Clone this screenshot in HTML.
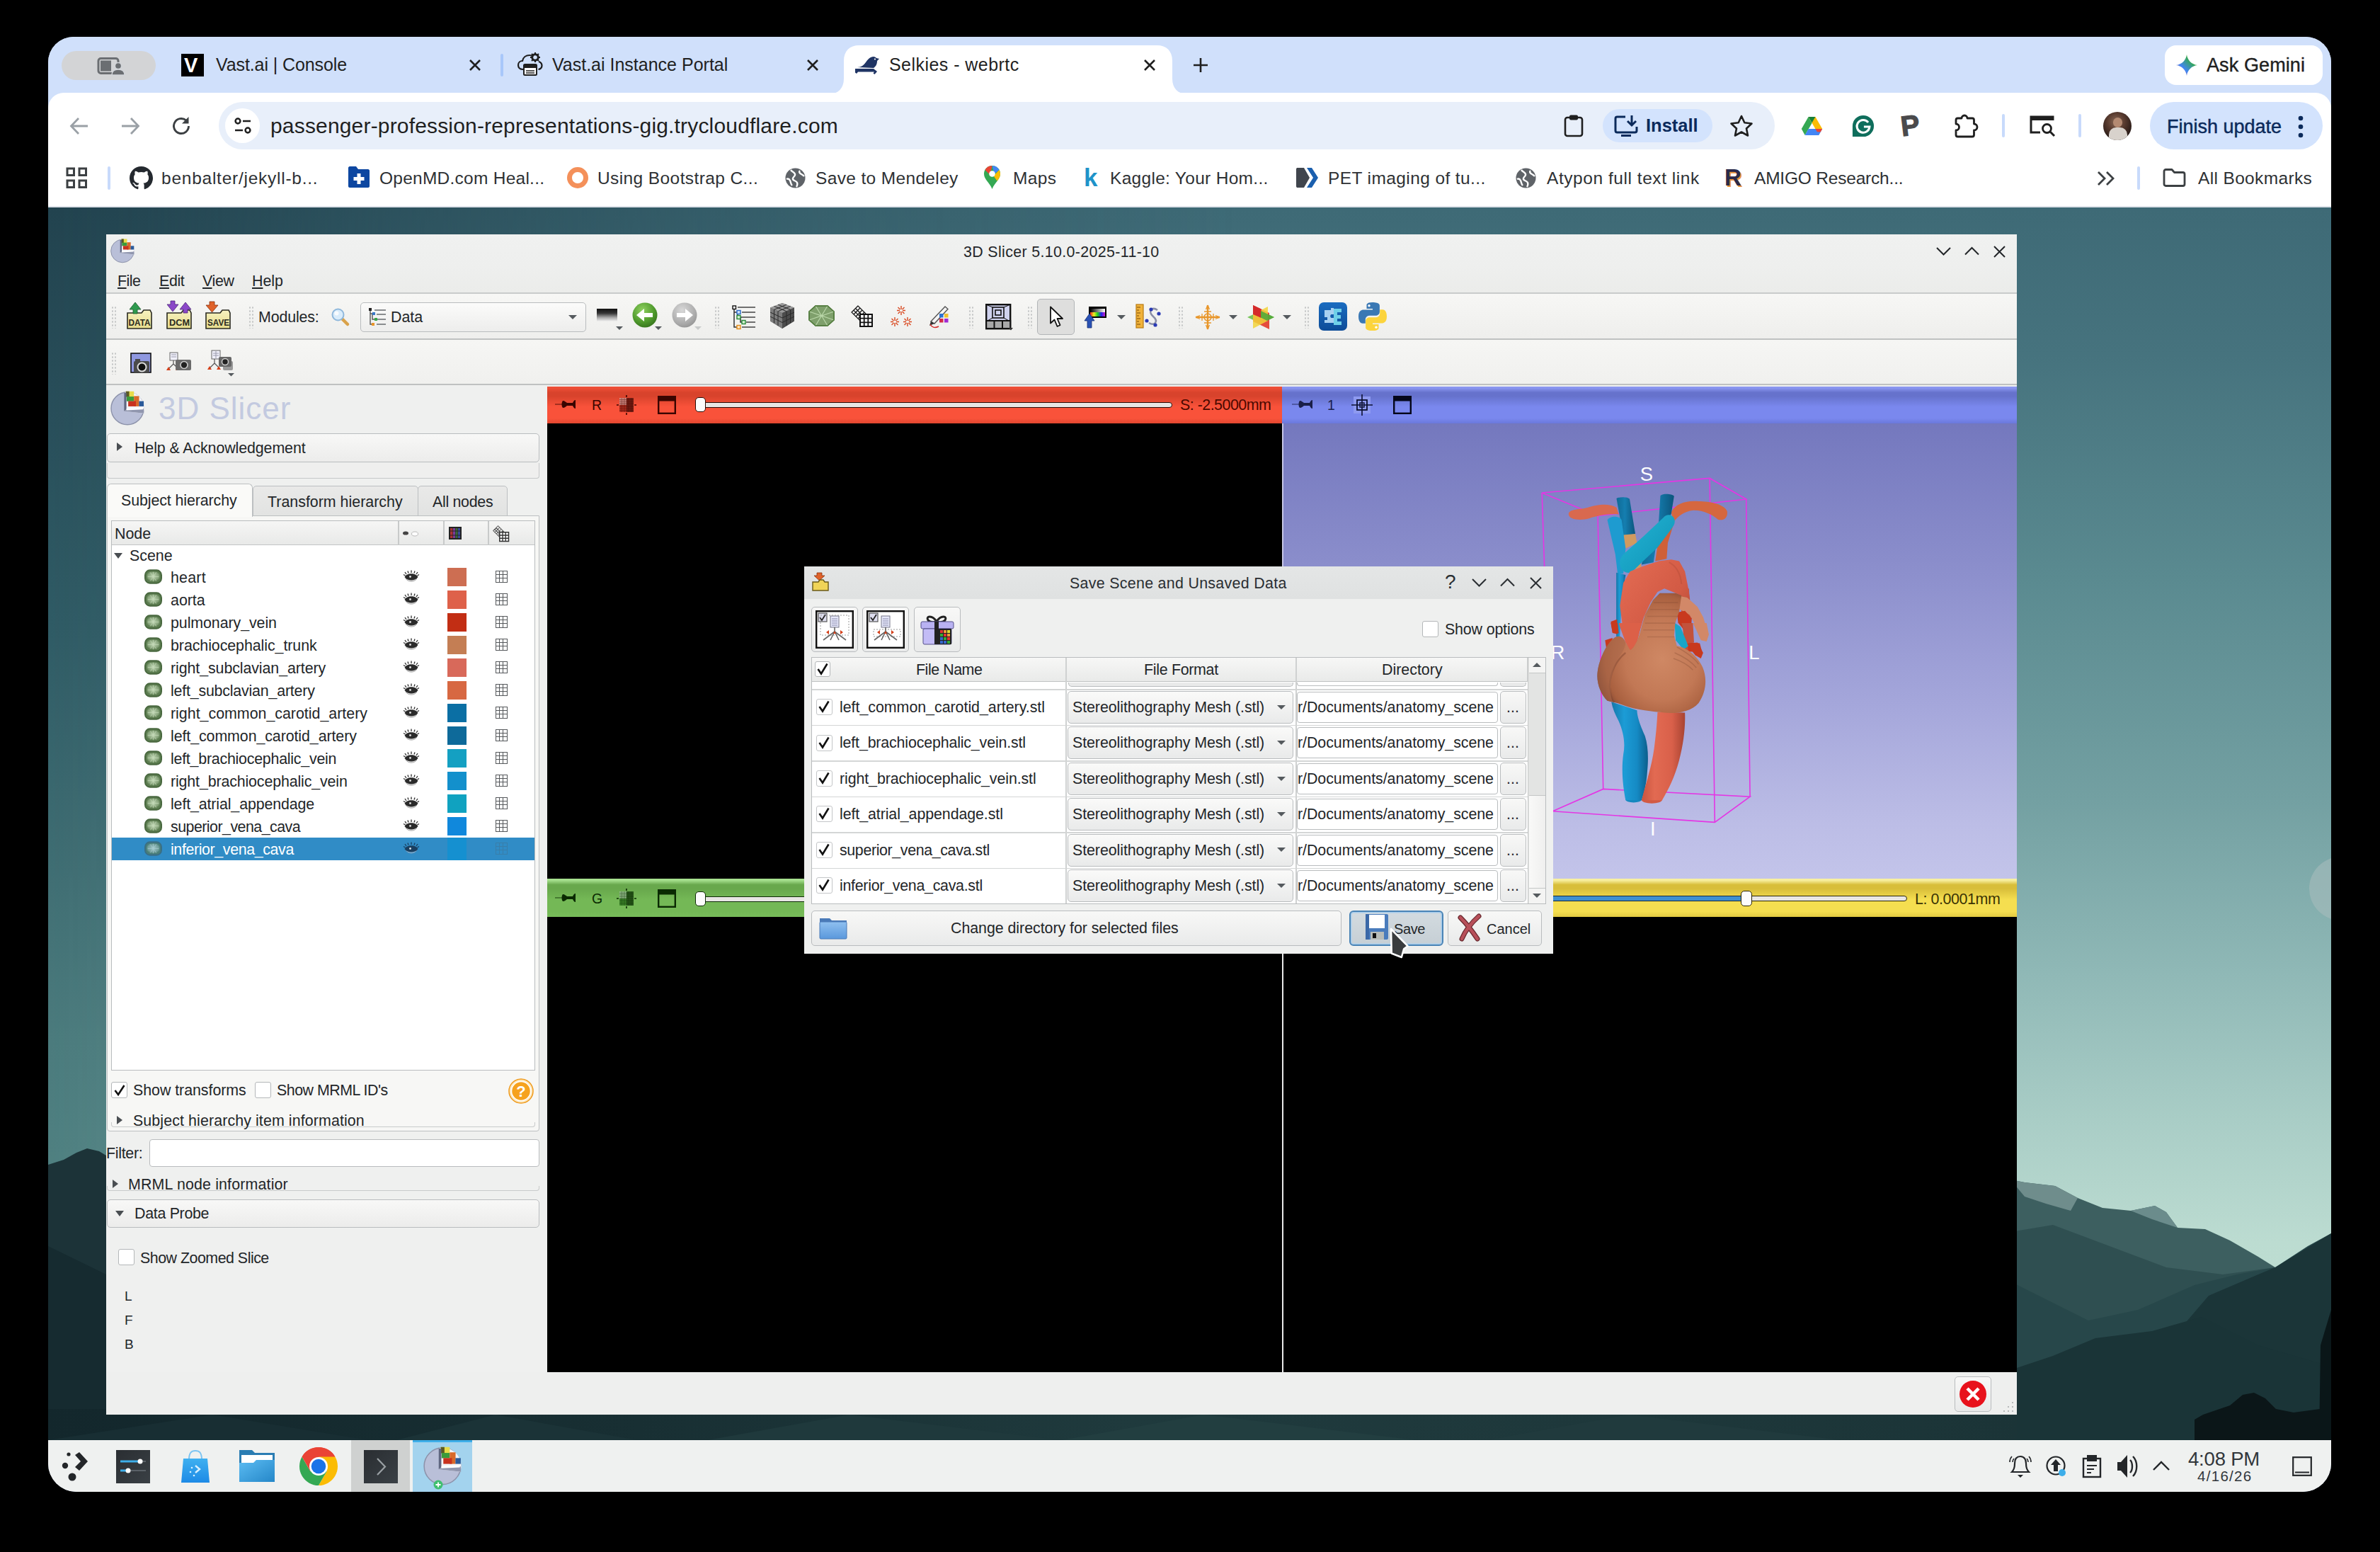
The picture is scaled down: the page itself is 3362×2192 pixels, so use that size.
<!DOCTYPE html>
<html lang="en">
<head>
<meta charset="utf-8">
<title>Selkies - webrtc</title>
<style>
*{box-sizing:border-box;margin:0;padding:0}
html,body{width:3362px;height:2192px;background:#000;overflow:hidden}
body{position:relative;font-family:"Liberation Sans",sans-serif;color:#1f1f1f}
.abs{position:absolute}
#win{position:absolute;left:68px;top:52px;width:3225px;height:2055px;border-radius:36px 36px 40px 40px;overflow:hidden;background:#d0e0fb}
/* everything inside #win uses page coords via this shifted layer */
#L{position:absolute;left:-68px;top:-52px;width:3362px;height:2192px}
.t{position:absolute;white-space:pre;line-height:1}
/* chrome */
.ctab{font-size:25px;letter-spacing:.35px;color:#1f1f1f}
.bm{font-size:24.5px;letter-spacing:.4px;color:#2e3134}
/* slicer (Qt) text */
.q{font-size:21.4px;color:#232629;margin-top:.8px}
svg{position:absolute;overflow:visible}

.hdl{position:absolute;width:7px;height:32px;background-image:radial-gradient(circle,#c4c6c6 1px,transparent 1.3px);background-size:4px 5px}
.dn{position:absolute;width:0;height:0;border-left:6px solid transparent;border-right:6px solid transparent;border-top:6px solid #555a5e}
.tri-r{position:absolute;width:0;height:0;border-top:6.500px solid transparent;border-bottom:6.500px solid transparent;border-left:8px solid #4a4e52}
.tri-d{position:absolute;width:0;height:0;border-left:6.500px solid transparent;border-right:6.500px solid transparent;border-top:8px solid #4a4e52}
.btn{position:absolute;border:1.500px solid #b9bcbe;border-radius:5px;background:linear-gradient(#f8f8f7,#e9eaea)}
.cb{position:absolute;width:23px;height:23px;border:1.500px solid #b4b7b9;border-radius:3px;background:#fff}

.ey{position:absolute;width:22px;height:14px}.gi{position:absolute;width:17px;height:17px;border:1.6px solid #55585b;background:linear-gradient(90deg,transparent 3.6px,#55585b 3.6px,#55585b 5.2px,transparent 5.2px,transparent 8.8px,#55585b 8.8px,#55585b 10.4px,transparent 10.4px),linear-gradient(180deg,transparent 3.6px,#55585b 3.6px,#55585b 5.2px,transparent 5.2px,transparent 8.8px,#55585b 8.8px,#55585b 10.4px,transparent 10.4px);background-color:#fff}
</style>
</head>
<body>
<div id="win"><div id="L">
<!-- ================= CHROME TOP ================= -->
<div class="abs" style="left:68px;top:52px;width:3225px;height:80px;background:#d0e0fb"></div>
<div class="abs" style="left:68px;top:131px;width:3225px;height:162px;background:#fff;border-radius:22px 22px 0 0"></div>
<div class="abs" style="left:68px;top:291px;width:3225px;height:2px;background:#dfe3ea"></div>
<!-- tab search pill -->
<div class="abs" style="left:87px;top:72px;width:133px;height:41px;border-radius:21px;background:#d3d4d6"></div>
<svg style="left:137px;top:80px" width="40" height="28" viewBox="0 0 40 28"><rect x="2" y="2.5" width="28" height="21" rx="3.5" fill="none" stroke="#6b6e72" stroke-width="3"/><rect x="5" y="5.5" width="15" height="15" fill="#6b6e72"/><circle cx="30" cy="13" r="4.6" fill="#6b6e72" stroke="#d2d5da" stroke-width="1.5"/><path d="M21 26c0-6 4-8 9-8s9 2 9 8z" fill="#6b6e72" stroke="#d2d5da" stroke-width="1.5"/></svg>
<!-- tab 1 -->
<div class="abs" style="left:256px;top:76px;width:32px;height:32px;background:#000"></div>
<div class="t" style="left:260px;top:78px;font-size:29px;font-weight:700;color:#fff">V</div>
<div class="t ctab" style="left:305px;top:79px;letter-spacing:-.1px">Vast.ai | Console</div>
<svg style="left:662px;top:83px" width="18" height="18" viewBox="0 0 18 18"><path d="M2 2l14 14M16 2L2 16" stroke="#1f1f1f" stroke-width="2.6"/></svg>
<div class="abs" style="left:707px;top:76px;width:4px;height:32px;border-radius:2px;background:#a8c7fa"></div>
<!-- tab 2 -->
<svg style="left:730px;top:73px" width="38" height="38" viewBox="0 0 38 38"><path d="M9 25c-5 0-7-3-7-6 0-4 3-6 6-6 1-5 5-8 10-8 2 0 4 .6 5.5 1.6" fill="none" stroke="#1f1f1f" stroke-width="2.2"/><path d="M31 14c3 1 4.500 3 4.500 5.500 0 3-2 5-5 5.500" fill="none" stroke="#1f1f1f" stroke-width="2.2"/><circle cx="26" cy="8" r="4.300" fill="none" stroke="#1f1f1f" stroke-width="3"/><path d="M26 1v3M26 12v3M19 8h3M30 8h3M21 3l2 2M29 11l2 2M31 3l-2 2M23 11l-2 2" stroke="#1f1f1f" stroke-width="2"/><rect x="10" y="18" width="18" height="15" rx="1.5" fill="#fff" stroke="#1f1f1f" stroke-width="2"/><rect x="10" y="18" width="18" height="5" fill="#1f1f1f"/><path d="M13 27h12M13 30h12" stroke="#1f1f1f" stroke-width="1.6"/></svg>
<div class="t ctab" style="left:780px;top:79px;letter-spacing:0">Vast.ai Instance Portal</div>
<svg style="left:1139px;top:83px" width="18" height="18" viewBox="0 0 18 18"><path d="M2 2l14 14M16 2L2 16" stroke="#1f1f1f" stroke-width="2.6"/></svg>
<!-- active tab -->
<svg style="left:1170px;top:64px" width="508" height="69" viewBox="0 0 508 69"><path d="M0 69C14 69 22 61 22 47V22C22 8 30 0 44 0H464C478 0 486 8 486 22V47C486 61 494 69 508 69Z" fill="#fff"/></svg>
<svg style="left:1207px;top:78px" width="36" height="28" viewBox="0 0 36 28"><path d="M4 17c6 0 9-3 12-7 3-4 6-8 11-8 2 0 3 1 4 2l4 1-3 3c0 5-2 8-5 10z" fill="#1f3464"/><path d="M1 19h26l5 4-3.500 4-2-1.500 1.500-2H5l-2 2.500-2-1.500z" fill="#1f3464"/><circle cx="29" cy="5.500" r="1.100" fill="#fff"/></svg>
<div class="t ctab" style="left:1256px;top:79px;letter-spacing:.45px">Selkies - webrtc</div>
<svg style="left:1615px;top:83px" width="18" height="18" viewBox="0 0 18 18"><path d="M2 2l14 14M16 2L2 16" stroke="#1f1f1f" stroke-width="2.6"/></svg>
<svg style="left:1685px;top:81px" width="22" height="22" viewBox="0 0 22 22"><path d="M11 1v20M1 11h20" stroke="#1f1f1f" stroke-width="2.6"/></svg>
<!-- Ask Gemini -->
<div class="abs" style="left:3058px;top:64px;width:223px;height:56px;border-radius:16px;background:#fff"></div>
<svg style="left:3073px;top:76px" width="32" height="32" viewBox="0 0 32 32"><defs><linearGradient id="gem" x1="0" y1="1" x2="1" y2="0"><stop offset="0" stop-color="#e94335"/><stop offset=".35" stop-color="#4285f4"/><stop offset=".7" stop-color="#34a853"/><stop offset="1" stop-color="#fbbc04"/></linearGradient></defs><path d="M16 1C17 9 23 15 31 16 23 17 17 23 16 31 15 23 9 17 1 16 9 15 15 9 16 1Z" fill="url(#gem)"/></svg>
<div class="t" style="left:3117px;top:78.5px;font-size:27px;letter-spacing:.1px;color:#1f1f1f;-webkit-text-stroke:.4px #1f1f1f">Ask Gemini</div>
<!-- toolbar nav -->
<svg style="left:97px;top:163px" width="30" height="30" viewBox="0 0 30 30"><path d="M27 15H4M14 4L3.500 15 14 26" fill="none" stroke="#9aa0a6" stroke-width="2.800"/></svg>
<svg style="left:169px;top:163px" width="30" height="30" viewBox="0 0 30 30"><path d="M3 15h23M16 4l10.500 11L16 26" fill="none" stroke="#9aa0a6" stroke-width="2.800"/></svg>
<svg style="left:240px;top:162px" width="32" height="32" viewBox="0 0 32 32"><path d="M26.500 16A10.500 10.500 0 1 1 23 8.200" fill="none" stroke="#3c4043" stroke-width="2.900"/><path d="M26.500 3v9.500H17z" fill="#3c4043"/></svg>
<!-- omnibox -->
<div class="abs" style="left:309px;top:144px;width:2198px;height:67px;border-radius:34px;background:#e8effa"></div>
<div class="abs" style="left:318px;top:153px;width:49px;height:49px;border-radius:25px;background:#fff"></div>
<svg style="left:330px;top:165px" width="26" height="26" viewBox="0 0 26 26"><circle cx="6" cy="6" r="3.400" fill="none" stroke="#1f1f1f" stroke-width="2.500"/><path d="M13 6h11" stroke="#1f1f1f" stroke-width="2.500"/><circle cx="20" cy="19" r="3.400" fill="none" stroke="#1f1f1f" stroke-width="2.500"/><path d="M2 19h11" stroke="#1f1f1f" stroke-width="2.500"/></svg>
<div class="t" style="left:382px;top:163px;font-size:30px;letter-spacing:.17px;color:#1f1f1f">passenger-profession-representations-gig.trycloudflare.com</div>
<!-- omnibox right icons -->
<svg style="left:2208px;top:161px" width="30" height="34" viewBox="0 0 30 34"><rect x="3" y="5" width="24" height="26" rx="3" fill="none" stroke="#1f1f1f" stroke-width="2.600"/><rect x="9" y="1.500" width="12" height="7" rx="2" fill="#1f1f1f"/></svg>
<div class="abs" style="left:2264px;top:154px;width:155px;height:47px;border-radius:24px;background:#d3e3fd"></div>
<svg style="left:2279px;top:162px" width="36" height="32" viewBox="0 0 36 32"><path d="M17 3H5.500C4 3 3 4 3 5.500v17C3 24 4 25 5.500 25h25c1.500 0 2.500-1 2.500-2.500V17" fill="none" stroke="#0b2a5b" stroke-width="3"/><path d="M11 29.500h14" stroke="#0b2a5b" stroke-width="3"/><path d="M26 1v13M20 9l6 6 6-6" fill="none" stroke="#0b2a5b" stroke-width="3"/></svg>
<div class="t" style="left:2325px;top:165px;font-size:25.5px;font-weight:700;letter-spacing:0;color:#0b2a5b">Install</div>
<svg style="left:2443px;top:161px" width="34" height="34" viewBox="0 0 34 34"><path d="M17 3l4.300 9.300 10.200 1.200-7.500 7 2 10L17 25.500 8 30.500l2-10-7.500-7 10.200-1.200z" fill="none" stroke="#1f1f1f" stroke-width="2.600" stroke-linejoin="round"/></svg>
<!-- extension icons -->
<svg style="left:2544px;top:164px" width="31" height="28" viewBox="0 0 38 34"><path d="M13 1h12l12 21H25z" fill="#fbbc04"/><path d="M13 1L1 22l6 11 12-21z" fill="#34a853"/><path d="M13 22h24l-6 11H7z" fill="#4285f4"/><path d="M25 22h12l-3 5.500L28 27z" fill="#ea4335"/><path d="M13 1l6 10.500L25 1z" fill="#188038"/></svg>
<svg style="left:2616px;top:162px" width="32" height="32" viewBox="0 0 34 34"><path d="M17 1a16 16 0 0 1 0 32H1V17A16 16 0 0 1 17 1z" fill="#0f6e5c"/><path d="M24.500 11.500A9.500 9.500 0 1 0 26.500 18H18" fill="none" stroke="#fff" stroke-width="3.200"/></svg>
<div class="t" style="left:2685px;top:157px;font-size:40px;font-weight:700;color:#4a4a4c;transform:rotate(-7deg);-webkit-text-stroke:1.200px #4a4a4c">P</div>
<svg style="left:2758px;top:160px" width="36" height="36" viewBox="0 0 36 36"><path d="M13 7a4 4 0 0 1 8 0h7c1.500 0 2.500 1 2.500 2.500V15a4.500 4.500 0 0 1 0 9v6.500c0 1.500-1 2.500-2.500 2.500H7.500C6 33 5 32 5 30.500V24a4.500 4.500 0 0 0 0-9V9.500C5 8 6 7 7.500 7z" fill="none" stroke="#1f1f1f" stroke-width="2.800" stroke-linejoin="round"/></svg>
<div class="abs" style="left:2828px;top:161px;width:4px;height:33px;border-radius:2px;background:#c8dafb"></div>
<svg style="left:2866px;top:162px" width="38" height="32" viewBox="0 0 38 32"><path d="M34 8V3H3v22h13" fill="none" stroke="#1f1f1f" stroke-width="3"/><rect x="3" y="2" width="31" height="6" fill="#1f1f1f"/><circle cx="25.500" cy="19.500" r="6" fill="none" stroke="#1f1f1f" stroke-width="2.800"/><path d="M30 24l6 6" stroke="#1f1f1f" stroke-width="3"/></svg>
<div class="abs" style="left:2936px;top:161px;width:4px;height:33px;border-radius:2px;background:#c8dafb"></div>
<div class="abs" style="left:2971px;top:158px;width:40px;height:40px;border-radius:20px;background:radial-gradient(circle at 45% 35%,#8a6a58 0,#5a3c30 35%,#2b1c18 70%,#1a1210 100%);overflow:hidden"><div class="abs" style="left:14px;top:8px;width:13px;height:14px;border-radius:7px;background:#b48a72"></div><div class="abs" style="left:8px;top:22px;width:26px;height:20px;border-radius:10px 10px 0 0;background:#d8d2cc"></div></div>
<div class="abs" style="left:3037px;top:144px;width:244px;height:67px;border-radius:34px;background:#d3e3fd"></div>
<div class="t" style="left:3061px;top:166px;font-size:27px;color:#0b2a5b;-webkit-text-stroke:.45px #0b2a5b">Finish update</div>
<svg style="left:3246px;top:162px" width="8" height="34" viewBox="0 0 8 34"><circle cx="4" cy="5" r="3.300" fill="#0b2a5b"/><circle cx="4" cy="17" r="3.300" fill="#0b2a5b"/><circle cx="4" cy="29" r="3.300" fill="#0b2a5b"/></svg>
<!-- bookmarks bar -->
<svg style="left:93px;top:236px" width="31" height="31" viewBox="0 0 31 31"><g fill="none" stroke="#3c4043" stroke-width="3"><rect x="2" y="2" width="9.500" height="9.500"/><rect x="19" y="2" width="9.500" height="9.500"/><rect x="2" y="19" width="9.500" height="9.500"/><rect x="19" y="19" width="9.500" height="9.500"/></g></svg>
<div class="abs" style="left:152px;top:235px;width:4px;height:33px;border-radius:2px;background:#c8dafb"></div>
<svg style="left:183px;top:235px" width="33" height="33" viewBox="0 0 16 16"><path fill="#24292f" d="M8 0C3.580 0 0 3.580 0 8c0 3.540 2.290 6.530 5.470 7.590.4.070.55-.17.55-.38 0-.19-.01-.82-.01-1.490-2.010.37-2.530-.49-2.690-.94-.09-.23-.48-.94-.82-1.130-.28-.15-.68-.52-.01-.53.630-.01 1.080.58 1.230.82.720 1.210 1.870.87 2.330.66.070-.52.280-.87.510-1.070-1.780-.2-3.640-.89-3.640-3.950 0-.87.310-1.590.82-2.150-.08-.2-.36-1.020.08-2.120 0 0 .67-.21 2.200.82.640-.18 1.320-.27 2-.27s1.360.09 2 .27c1.530-1.040 2.200-.82 2.200-.82.440 1.100.160 1.920.08 2.120.51.560.82 1.270.82 2.150 0 3.070-1.870 3.750-3.650 3.950.29.250.54.730.54 1.480 0 1.070-.01 1.930-.01 2.200 0 .21.150.46.550.38A8.013 8.013 0 0 0 16 8c0-4.420-3.580-8-8-8z"/></svg>
<div class="t bm" style="left:228px;top:240px;letter-spacing:.75px">benbalter/jekyll-b...</div>
<svg style="left:491px;top:234px" width="32" height="32" viewBox="0 0 32 32"><path d="M1 3c0-1 1-2 2-2h9l3 4h14c1 0 2 1 2 2v22c0 1-1 2-2 2H3c-1 0-2-1-2-2z" fill="#0d47a1"/><path d="M13.500 11h5v5h5v5h-5v5h-5v-5h-5v-5h5z" fill="#fff"/></svg>
<div class="t bm" style="left:536px;top:240px;letter-spacing:.25px">OpenMD.com Heal...</div>
<svg style="left:800px;top:235px" width="32" height="32" viewBox="0 0 32 32"><circle cx="16" cy="16" r="11.500" fill="none" stroke="#f4905a" stroke-width="7"/></svg>
<div class="t bm" style="left:844px;top:240px;letter-spacing:.4px">Using Bootstrap C...</div>
<svg style="left:1108px;top:236px" width="31" height="31" viewBox="0 0 31 31"><circle cx="15.500" cy="15.500" r="14" fill="#5f6368"/><path d="M9 4c2 3 5 3 6 6s-4 4-3 7 5 2 6 5-1 6-1 6M22 5c-2 2 0 4 2 5s4 3 4 3M3 17c2-1 4 0 5 2s1 5 3 7" fill="none" stroke="#fff" stroke-width="2.400"/></svg>
<div class="t bm" style="left:1152px;top:240px;letter-spacing:.35px">Save to Mendeley</div>
<svg style="left:1390px;top:234px" width="23" height="34" viewBox="0 0 23 34"><path d="M11.500 33C9 25 0 20 0 11.500a11.500 11.500 0 0 1 23 0C23 20 14 25 11.500 33z" fill="#34a853"/><path d="M11.500 0A11.500 11.500 0 0 0 1.500 6l7 7z" fill="#ea4335"/><path d="M11.500 0a11.500 11.500 0 0 1 10 6l-7 6z" fill="#4285f4"/><path d="M21.500 6c1 2 1.500 4 1.500 5.500 0 4-2 7-4.500 10l-5-7z" fill="#fbbc04"/><path d="M1.500 6C.5 8 0 10 0 11.500c0 3 1.500 6 3.500 8.500l6-7z" fill="#1a73e8" opacity=".0"/><circle cx="11.500" cy="11.500" r="4.300" fill="#fff"/></svg>
<div class="t bm" style="left:1431px;top:240px">Maps</div>
<div class="t" style="left:1531px;top:233px;font-size:35px;font-weight:700;color:#1f93c9">k</div>
<div class="t bm" style="left:1568px;top:240px;letter-spacing:.3px">Kaggle: Your Hom...</div>
<svg style="left:1830px;top:236px" width="34" height="30" viewBox="0 0 34 30"><path d="M1 3c0-1.500 1-2 2-2h9l8 14-8 14H3c-1 0-2-.500-2-2z" fill="#40454d"/><path d="M16 1h7l9 14-9 14h-7l9-14z" fill="#1b5fae"/></svg>
<div class="t bm" style="left:1876px;top:240px;letter-spacing:.4px">PET imaging of tu...</div>
<svg style="left:2140px;top:236px" width="31" height="31" viewBox="0 0 31 31"><circle cx="15.500" cy="15.500" r="14" fill="#5f6368"/><path d="M9 4c2 3 5 3 6 6s-4 4-3 7 5 2 6 5-1 6-1 6M22 5c-2 2 0 4 2 5s4 3 4 3M3 17c2-1 4 0 5 2s1 5 3 7" fill="none" stroke="#fff" stroke-width="2.400"/></svg>
<div class="t bm" style="left:2185px;top:240px;letter-spacing:.55px">Atypon full text link</div>
<div class="t" style="left:2436px;top:234px;font-size:33px;font-weight:700;color:#2a2a4a;text-shadow:2px 2px 0 #e8923a">R</div>
<div class="t bm" style="left:2478px;top:240px;letter-spacing:-.2px">AMIGO Research...</div>
<svg style="left:2962px;top:241px" width="26" height="22" viewBox="0 0 26 22"><path d="M2 2l9 9-9 9M14 2l9 9-9 9" fill="none" stroke="#3c4043" stroke-width="2.800"/></svg>
<div class="abs" style="left:3019px;top:235px;width:4px;height:33px;border-radius:2px;background:#c8dafb"></div>
<svg style="left:3055px;top:237px" width="33" height="28" viewBox="0 0 33 28"><path d="M2 5c0-1.500 1-2.500 2.500-2.500H13l3.500 4h12c1.500 0 2.500 1 2.500 2.500v14c0 1.500-1 2.500-2.500 2.500h-24C3 25.500 2 24.500 2 23z" fill="none" stroke="#3c4043" stroke-width="2.800" stroke-linejoin="round"/></svg>
<div class="t bm" style="left:3105px;top:240px;letter-spacing:.35px">All Bookmarks</div>
<!-- ================= DESKTOP WALLPAPER ================= -->
<div class="abs" style="left:68px;top:293px;width:3225px;height:1741px;background:linear-gradient(180deg,#3e6a76 0,#46737e 12%,#5a8a90 30%,#73a0a2 48%,#8fb8b6 62%,#a9cdc6 74%,#bcdcd1 84%,#c2e0d3 100%)"></div>
<div class="abs" style="left:68px;top:293px;width:3225px;height:1741px;background:linear-gradient(180deg,#22434f 0,#2f5a64 34%,#4a7a7c 67.5%,#4e7f80 77%,#4e7f80 100%);-webkit-mask-image:linear-gradient(90deg,#000 0,rgba(0,0,0,.92) 4%,rgba(0,0,0,.6) 16%,rgba(0,0,0,.25) 34%,rgba(0,0,0,0) 52%);mask-image:linear-gradient(90deg,#000 0,rgba(0,0,0,.92) 4%,rgba(0,0,0,.6) 16%,rgba(0,0,0,.25) 34%,rgba(0,0,0,0) 52%)"></div>
<svg style="left:68px;top:1500px" width="3225" height="534" viewBox="68 1500 3225 534">
<!-- right far ridge -->
<path d="M2840 1666L2860 1670 2903 1675 2935 1692 2970 1706 3010 1710 3044 1703 3060 1712 3076 1734 3115 1736 3150 1752 3190 1775 3214 1790 3293 1800V2034H2840Z" fill="#3d5f60"/>
<path d="M2840 1666L2860 1670 2903 1675 2935 1692 2925 1710 2890 1700 2860 1690Z" fill="#6f8d8c"/>
<path d="M3010 1710L3044 1703 3060 1712 3076 1734 3040 1722Z" fill="#6b8c8c"/>
<path d="M2840 1740L2900 1730 2980 1760 3060 1790 3140 1800 3214 1790 3293 1800V2034H2840Z" fill="#2f4f51"/>
<path d="M2840 1810L2880 1830 2950 1865 3020 1850 3100 1815 3160 1800 3214 1790 3260 1760 3293 1742V2034H2840Z" fill="#27474a"/>
<path d="M3214 1790L3260 1762 3293 1742V2034H3000L3060 1900 3120 1830 3190 1800Z" fill="#1b3538"/>
<path d="M2840 1935L2900 1915 2960 1890 3040 1880 3110 1860 3190 1900 3293 1930V2034H2840Z" fill="#1a3437"/>
<path d="M3278 1900L3293 1850V2034H3276Z" fill="#0a1618"/>
<!-- left ridge -->
<path d="M68 1645L90 1638 108 1628 123 1622 140 1626 150 1632V2034H68Z" fill="#1c3338"/>
<path d="M68 1760L150 1800V2034H68Z" fill="#162b30"/>
<!-- bottom strip under slicer -->
<defs><linearGradient id="bs" x1="0" y1="0" x2="1" y2="0"><stop offset="0" stop-color="#13272c"/><stop offset=".3" stop-color="#182f33"/><stop offset=".55" stop-color="#1f3a3d"/><stop offset=".8" stop-color="#1e383b"/><stop offset="1" stop-color="#1b3437"/></linearGradient></defs><rect x="68" y="1990" width="2781" height="44" fill="url(#bs)"/>
<path d="M68 2034L300 1998 520 2034Z" fill="#182e33"/><path d="M700 1998L900 2034H560Z" fill="#1b3337"/><path d="M1200 1998L1500 2034H1000Z" fill="#1f393c"/><path d="M1700 1998L2000 2034H1500Z" fill="#223e40"/><path d="M2300 1998L2600 2034H2100Z" fill="#203a3d"/>
<path d="M3100 2034V2005L3112 1998 3150 1985 3168 1970 3184 1967 3200 1975 3215 1990 3240 1995 3277 1990V2034Z" fill="#0b1618"/>
</svg>
<!-- side widget on right edge -->
<div class="abs" style="left:3262px;top:1210px;width:90px;height:90px;border-radius:45px;background:rgba(170,190,190,.55)"></div>
<!-- ================= TASKBAR ================= -->
<div class="abs" style="left:68px;top:2034px;width:3225px;height:74px;background:#eff1f0"></div>
<div class="abs" style="left:496px;top:2034px;width:83px;height:74px;background:#cfd1d0"></div>
<div class="abs" style="left:583px;top:2034px;width:84px;height:74px;background:#a3d3ee"></div>
<div class="abs" style="left:583px;top:2034px;width:84px;height:3px;background:#3daee9"></div>
<!-- kicker -->
<svg style="left:84px;top:2046px" width="48" height="54" viewBox="0 0 48 54"><path d="M28 5l6-4 12 13-12 13-6-5 8-8z" fill="#232629" transform="translate(-6 4)"/><circle cx="13" cy="8" r="2.600" fill="#232629"/><circle cx="8" cy="24" r="4.200" fill="#232629"/><circle cx="18" cy="40" r="5.500" fill="#232629"/></svg>
<!-- system settings -->
<svg style="left:164px;top:2048px" width="48" height="47" viewBox="0 0 48 47"><defs><linearGradient id="dk" x1="0" y1="0" x2="1" y2="1"><stop offset="0" stop-color="#2a2e32"/><stop offset="1" stop-color="#3a4045"/></linearGradient></defs><rect width="48" height="47" fill="url(#dk)"/><path d="M6 16h36M6 29h36" stroke="#5a6167" stroke-width="2"/><path d="M6 16h28M6 29h11" stroke="#3daee9" stroke-width="3"/><circle cx="34" cy="16" r="3.500" fill="#fff"/><circle cx="17" cy="29" r="3.500" fill="#fff"/></svg>
<!-- discover -->
<svg style="left:254px;top:2046px" width="44" height="50" viewBox="0 0 44 50"><defs><linearGradient id="bag" x1="0" y1="0" x2="0" y2="1"><stop offset="0" stop-color="#3fb0f0"/><stop offset="1" stop-color="#1d8ae6"/></linearGradient></defs><path d="M13 16C13 6 16 3 22 3s9 3 9 13" fill="none" stroke="#7cc4f2" stroke-width="2"/><path d="M5 14h34l3 34H2z" fill="url(#bag)"/><path d="M22 24l6 5-6 5" fill="none" stroke="#d8f0ff" stroke-width="2.400"/><circle cx="17" cy="27" r="1.300" fill="#d8f0ff"/><circle cx="15" cy="33" r="1.300" fill="#d8f0ff"/><circle cx="20" cy="38" r="1.300" fill="#d8f0ff"/></svg>
<!-- dolphin -->
<svg style="left:337px;top:2046px" width="52" height="48" viewBox="0 0 52 48"><defs><linearGradient id="fol" x1="0" y1="0" x2="1" y2="1"><stop offset="0" stop-color="#5bbcf3"/><stop offset="1" stop-color="#2587c8"/></linearGradient></defs><path d="M1 2h18l4 4h28v40H1z" fill="#2a7db3"/><rect x="4" y="9" width="44" height="12" fill="#fff"/><path d="M1 20h20l4-4h26v31H1z" fill="url(#fol)"/></svg>
<!-- chrome -->
<svg style="left:422px;top:2043px" width="56" height="56" viewBox="0 0 56 56"><circle cx="28" cy="28" r="27" fill="#fff"/><path d="M28 28L4.600 14.500A27 27 0 0 1 51.400 14.500Z" fill="#ea4335"/><path d="M4.600 14.500A27 27 0 0 1 51.400 14.500L28 14.500Z" fill="#ea4335"/><path d="M51.400 14.500A27 27 0 0 1 28 55L39.700 34.700 28 14.500Z" fill="#fbbc04"/><path d="M28 55A27 27 0 0 1 4.600 14.500L16.300 34.700 39.700 34.700Z" fill="#34a853"/><path d="M28 14.500L16.300 34.700 4.600 14.500Z" fill="#ea4335"/><circle cx="28" cy="28" r="13" fill="#fff"/><circle cx="28" cy="28" r="10.300" fill="#1a73e8"/></svg>
<!-- konsole -->
<svg style="left:514px;top:2048px" width="48" height="47" viewBox="0 0 48 47"><rect width="48" height="47" fill="url(#dk)"/><path d="M19 12l11 11.500L19 35" fill="none" stroke="#9aa0a4" stroke-width="2.200"/></svg>
<!-- slicer task -->
<svg style="left:598px;top:2043px" width="54" height="55.500" viewBox="0 0 34 35"><circle cx="17" cy="17.500" r="16.300" fill="#b9bfd8" stroke="#8d93ab" stroke-width="1"/><path d="M14 1.500V20.300L33 22.500A16.300 16.300 0 0 0 14 1.500z" fill="#f4f5f9"/><rect x="15.500" y=".500" width="8" height="5.500" fill="#e8dc4a"/><rect x="15.500" y=".500" width="3.300" height="5.500" fill="#5a5a24"/><rect x="16.200" y="5.700" width="7.300" height="4.700" fill="#3a9a3a"/><rect x="23.500" y="5.200" width="5.200" height="10.300" fill="#d86a2a"/><rect x="17.800" y="10.300" width="7.700" height="5.200" fill="#c8321e"/><rect x="28.600" y="10.300" width="4.700" height="5.200" fill="#2a5a9a"/><path d="M13.700 1.600V20.300l2.300-1.700V2z" fill="#5f6680"/><path d="M13.700 20.300l2.300-1.700 17.300-.8.200 4.700z" fill="#9096ae"/><path d="M16 18.600l16.500-.8" stroke="#fff" stroke-width="1.600"/></svg><svg style="left:612px;top:2090px" width="14" height="14" viewBox="0 0 14 14"><circle cx="7" cy="7" r="6.500" fill="#3fbf6f"/><path d="M3.500 7h7M7 3.500v7" stroke="#fff" stroke-width="1.800"/></svg>
<!-- tray -->
<svg style="left:2836px;top:2052px" width="36" height="38" viewBox="0 0 36 38"><path d="M18 5c-6 0-8 5-8 10 0 6-1 9-4 12h24c-3-3-4-6-4-12 0-5-2-10-8-10z" fill="none" stroke="#232629" stroke-width="2.200"/><path d="M14 31h8l-4 4z" fill="#232629"/><path d="M6 5c-2 2-3 5-3 8M30 5c2 2 3 5 3 8M9 8c-1 1-2 3-2 5M27 8c1 1 2 3 2 5" fill="none" stroke="#232629" stroke-width="1.600"/></svg>
<svg style="left:2888px;top:2054px" width="36" height="36" viewBox="0 0 36 36"><circle cx="16" cy="16" r="12.500" fill="none" stroke="#232629" stroke-width="2.200"/><path d="M16 7l7 8h-4v9h-6v-9H9z" fill="#232629"/><circle cx="25" cy="26" r="5" fill="#3daee9"/></svg>
<svg style="left:2941px;top:2054px" width="28" height="34" viewBox="0 0 28 34"><rect x="2" y="6" width="24" height="26" fill="none" stroke="#232629" stroke-width="2.400"/><rect x="7" y="1" width="14" height="9" fill="#232629"/><path d="M7 16h14M7 21h10M7 26h6" stroke="#232629" stroke-width="2"/></svg>
<svg style="left:2989px;top:2052px" width="34" height="38" viewBox="0 0 34 38"><path d="M2 13h5l9-10v32L7 25H2z" fill="#232629"/><path d="M20 10c4 4 4 14 0 18M24 5c7 7 7 21 0 28" fill="none" stroke="#232629" stroke-width="2.400"/></svg>
<svg style="left:3040px;top:2062px" width="26" height="16" viewBox="0 0 26 16"><path d="M2 14L13 3l11 11" fill="none" stroke="#232629" stroke-width="2.400"/></svg>
<div class="t" style="left:3091px;top:2047px;font-size:27.500px;color:#31363b;letter-spacing:-.2px">4:08 PM</div>
<div class="t" style="left:3104px;top:2075px;font-size:20.500px;color:#31363b;letter-spacing:1.300px">4/16/26</div>
<svg style="left:3238px;top:2057px" width="28" height="28" viewBox="0 0 28 28"><rect x="1.200" y="1.200" width="25.600" height="25.600" fill="none" stroke="#232629" stroke-width="2.200"/><path d="M4 22.500h20" stroke="#232629" stroke-width="2"/></svg>
<!-- ================= 3D SLICER WINDOW ================= -->
<div class="abs" style="left:150px;top:331px;width:2699px;height:1667px;background:#eff0ef"></div>
<!-- title bar -->
<div class="abs" style="left:150px;top:331px;width:2699px;height:44px;background:linear-gradient(#f0f1f0,#eeefee)"></div>
<svg style="left:156px;top:337px" width="34" height="35" viewBox="0 0 34 35"><circle cx="17" cy="17.500" r="16.300" fill="#b9bfd8" stroke="#8d93ab" stroke-width="1"/><path d="M14 1.500V20.300L33 22.500A16.300 16.300 0 0 0 14 1.500z" fill="#f4f5f9"/><rect x="15.500" y=".500" width="8" height="5.500" fill="#e8dc4a"/><rect x="15.500" y=".500" width="3.300" height="5.500" fill="#5a5a24"/><rect x="16.200" y="5.700" width="7.300" height="4.700" fill="#3a9a3a"/><rect x="23.500" y="5.200" width="5.200" height="10.300" fill="#d86a2a"/><rect x="17.800" y="10.300" width="7.700" height="5.200" fill="#c8321e"/><rect x="28.600" y="10.300" width="4.700" height="5.200" fill="#2a5a9a"/><path d="M13.700 1.600V20.300l2.300-1.700V2z" fill="#5f6680"/><path d="M13.700 20.300l2.300-1.700 17.300-.8.200 4.700z" fill="#9096ae"/><path d="M16 18.600l16.500-.8" stroke="#fff" stroke-width="1.600"/></svg>
<div class="t q" style="left:1361px;top:345.5px;letter-spacing:.35px">3D Slicer 5.10.0-2025-11-10</div>
<svg style="left:2734px;top:346px" width="104" height="20" viewBox="0 0 104 20"><path d="M2 4l9.500 9.500L21 4M42 13.500L51.500 4 61 13.500M83 2l15 15M98 2L83 17" fill="none" stroke="#232629" stroke-width="2"/></svg>
<!-- menu bar -->
<div class="abs" style="left:150px;top:375px;width:2699px;height:39px;background:linear-gradient(#eeefee,#ebecea)"></div>
<div class="t q" style="left:166px;top:386px;letter-spacing:-.5px"><u>F</u>ile</div>
<div class="t q" style="left:225px;top:386px;letter-spacing:-.35px"><u>E</u>dit</div>
<div class="t q" style="left:286px;top:386px;letter-spacing:-.35px"><u>V</u>iew</div>
<div class="t q" style="left:356px;top:386px"><u>H</u>elp</div>
<div class="abs" style="left:150px;top:413px;width:2699px;height:2px;background:#c9cbcb"></div>
<!-- toolbar 1 -->
<div class="abs" style="left:150px;top:415px;width:2699px;height:64px;background:linear-gradient(#f7f7f5,#eeeeec)"></div>
<div class="abs" style="left:150px;top:478px;width:2699px;height:2px;background:#bfc1c1"></div>
<!-- toolbar 2 -->
<div class="abs" style="left:150px;top:480px;width:2699px;height:62px;background:linear-gradient(#f6f6f4,#f0f0ee)"></div>
<div class="abs" style="left:150px;top:542px;width:2699px;height:2px;background:#bfc1c1"></div>
<div class="hdl" style="left:157px;top:432px"></div><div class="hdl" style="left:351px;top:432px"></div><div class="hdl" style="left:1009px;top:432px"></div><div class="hdl" style="left:1368px;top:432px"></div><div class="hdl" style="left:1451px;top:432px"></div><div class="hdl" style="left:1664px;top:432px"></div><div class="hdl" style="left:1842px;top:432px"></div><div class="hdl" style="left:157px;top:497px"></div>
<!-- DATA / DCM / SAVE -->
<svg style="left:178px;top:424px" width="150" height="44" viewBox="0 0 150 44"><defs><linearGradient id="fy" x1="0" y1="0" x2="0" y2="1"><stop offset="0" stop-color="#f7f2c0"/><stop offset="1" stop-color="#e6dc8c"/></linearGradient></defs>
<g stroke="#2a2a20" stroke-width="1.600" fill="url(#fy)"><path d="M2 18h20l3-4h9l2 4v22H2z"/><path d="M58 18h20l3-4h9l2 4v22H58z"/><path d="M113 18h20l3-4h9l2 4v22h-34z"/></g>
<path d="M5 13l8-10 8 10h-5v6H10v-6z" fill="#2e9a4e" stroke="#1a5a2c" stroke-width=".800"/>
<path d="M58 6h5V1h6v5h5l-8 10zM76 13l8-10 8 10h-5v5h-6v-5z" fill="#8b48c8" stroke="#4c2378" stroke-width=".800"/>
<path d="M113 7h5V2h7v5h5l-8.500 10z" fill="#e0622a" stroke="#8a3410" stroke-width=".800"/>
<g font-family="Liberation Sans,sans-serif" font-weight="700" font-size="13.500" fill="#2a2a20" stroke="none"><text x="3.500" y="36" textLength="31" lengthAdjust="spacingAndGlyphs">DATA</text><text x="61" y="36" textLength="29" lengthAdjust="spacingAndGlyphs">DCM</text><text x="115" y="36" textLength="31" lengthAdjust="spacingAndGlyphs">SAVE</text></g></svg>
<div class="t q" style="left:365px;top:437px;letter-spacing:-.15px">Modules:</div>
<svg style="left:467px;top:434px" width="28" height="28" viewBox="0 0 28 28"><path d="M15 15l9 9" stroke="#d9a24a" stroke-width="4.500" stroke-linecap="round"/><circle cx="10.500" cy="10.500" r="8" fill="#d9ecfb" stroke="#8fb8dc" stroke-width="2"/><circle cx="8.500" cy="8.500" r="3" fill="#fff" opacity=".8"/></svg>
<!-- module combobox -->
<div class="btn" style="left:509px;top:427px;width:319px;height:42px;background:linear-gradient(#fbfbfa,#ededec)"></div>
<svg style="left:520px;top:434px" width="26" height="28" viewBox="0 0 26 28"><path d="M3 2v22h4M3 9h5M6 9v8h4" fill="none" stroke="#555" stroke-width="1.400"/><path d="M9 4h16M12 10h13M12 17h13M12 24h13" stroke="#8a8d8f" stroke-width="2"/><rect x="1" y="1" width="4" height="4" fill="#222"/><rect x="6" y="7" width="4" height="4" fill="#3a78c8"/><rect x="9" y="15" width="4" height="4" fill="#3aa84a"/><rect x="5" y="22" width="4" height="4" fill="#e8962a"/></svg>
<div class="t q" style="left:552px;top:437px">Data</div>
<div class="dn" style="left:803px;top:445px"></div>
<!-- history / back / fwd -->
<div class="abs" style="left:843px;top:436px;width:29px;height:18px;background:linear-gradient(#111 0,#333 35%,#aaa 70%,#f2f2f2 100%)"></div>
<div class="dn" style="left:870px;top:461px;border-left-width:5px;border-right-width:5px;border-top-width:5px"></div>
<svg style="left:892px;top:426px" width="38" height="38" viewBox="0 0 38 38"><defs><radialGradient id="gg" cx=".4" cy=".3" r=".8"><stop offset="0" stop-color="#8fd060"/><stop offset=".6" stop-color="#4f9a2c"/><stop offset="1" stop-color="#2f6a18"/></radialGradient><radialGradient id="gr" cx=".4" cy=".3" r=".8"><stop offset="0" stop-color="#d8d8d8"/><stop offset=".7" stop-color="#a9a9a9"/><stop offset="1" stop-color="#8c8c8c"/></radialGradient></defs><circle cx="19" cy="19" r="17.500" fill="url(#gg)"/><path d="M30 16H18v-6L7 19l11 9v-6h12z" fill="#fff"/></svg>
<div class="dn" style="left:925px;top:461px;border-left-width:5px;border-right-width:5px;border-top-width:5px"></div>
<svg style="left:948px;top:426px" width="38" height="38" viewBox="0 0 38 38"><circle cx="19" cy="19" r="17.500" fill="url(#gr)"/><path d="M8 16h12v-6l11 9-11 9v-6H8z" fill="#fff"/></svg>
<div class="dn" style="left:981px;top:461px;border-left-width:5px;border-right-width:5px;border-top-width:5px;border-top-color:#c8caca"></div>
<!-- module shortcut icons -->
<svg style="left:1034px;top:431px" width="34" height="34" viewBox="0 0 34 34"><path d="M3 3v28h7M3 10h6M8 10v7h6M12 17v7h5" fill="none" stroke="#333" stroke-width="1.500"/><path d="M8 3h25M14 10h19M14 17h19M20 24h13M14 31h19" stroke="#444" stroke-width="1.500"/><rect x="1" y="1" width="4.500" height="4.500" fill="#fff" stroke="#111" stroke-width="1.400"/><rect x="7" y="7.500" width="5" height="5" fill="#cfe2fa" stroke="#2a6ac8" stroke-width="1.400"/><rect x="7" y="14.500" width="5" height="5" fill="#d2f0d2" stroke="#2a8a3a" stroke-width="1.400"/><rect x="14" y="21.500" width="5" height="5" fill="#d2f0d2" stroke="#2a8a3a" stroke-width="1.400"/><rect x="7" y="28.500" width="5" height="5" fill="#fde6c2" stroke="#e08a1a" stroke-width="1.400"/></svg>
<svg style="left:1086px;top:427px" width="38" height="38" viewBox="0 0 38 38"><path d="M19 1l17 6.500v19L19 37 2 26.500v-19z" fill="#6a6a6a"/><path d="M19 1l17 6.500L19 15 2 7.500z" fill="#9a9a9a"/><path d="M19 15v22L2 26.500v-19z" fill="#7c7c7c"/><path d="M19 15v22l17-10.500v-19z" fill="#4c4c4c"/><path d="M7.500 5.500l17 7M13 3.200l17 7M30.500 5.500l-17 7M25 3.200l-17 7M2 14l17 8 17-8M2 20l17 8.500 17-8.500M7.500 10v19.500M13 12.500V33M25 12.500V33M30.500 10v19.500" fill="none" stroke="#2a2a2a" stroke-width="1"/></svg>
<svg style="left:1142px;top:431px" width="37" height="30" viewBox="0 0 37 30"><path d="M10 1h17l9 8v12l-9 8H10l-9-8V9z" fill="#7fa06c" stroke="#4a6a3c" stroke-width="1.400"/><path d="M10 1l8.500 14L27 1M1 9l17.500 6L36 9M1 21l17.500-6L36 21M10 29l8.500-14L27 29" fill="none" stroke="#b9d6a8" stroke-width="1.200"/><path d="M10 1h17l9 8v12l-9 8H10l-9-8V9z" fill="none" stroke="#55803f" stroke-width="1.600"/></svg>
<svg style="left:1202px;top:431px" width="32" height="32" viewBox="0 0 32 32"><g fill="none" stroke="#111" stroke-width="1.200"><path d="M10 1L1 10l12 12 9-9zM6.500 4.500l12 12M3.800 7.200l12 12M13 4L4 13M16 7L7 16M19 10l-9 9"/></g><rect x="13" y="13" width="17" height="17" fill="#fff" stroke="#111" stroke-width="2"/><path d="M18.700 13v17M24.300 13v17M13 18.700h17M13 24.300h17" stroke="#111" stroke-width="1.800"/></svg>
<svg style="left:1256px;top:431px" width="34" height="32" viewBox="0 0 34 32"><g stroke="#d94a22" stroke-width="1.400"><path d="M17 1v5M17 9v5M11 7.500h4M19 7.500h4M12.500 3l3 3M21.500 12l-3-3M21.500 3l-3 3M12.500 12l3-3"/><path d="M8 17v5M8 25v5M2 23.500h4M10 23.500h4M3.500 19l3 3M12.500 28l-3-3M12.500 19l-3 3M3.500 28l3-3"/><path d="M26 17v5M26 25v5M20 23.500h4M28 23.500h4M21.500 19l3 3M30.500 28l-3-3M30.500 19l-3 3M21.500 28l3-3"/></g></svg>
<svg style="left:1311px;top:430px" width="34" height="34" viewBox="0 0 34 34"><path d="M4 24L24 3l4 3.500L9 27z" fill="#f4f4f4" stroke="#555" stroke-width="1.400"/><path d="M4 24l-2 6 7-3z" fill="#333"/><path d="M3 28c2 4 6 6 12 3" fill="none" stroke="#d42a2a" stroke-width="1.400"/><rect x="16" y="13" width="5.500" height="5.500" fill="#2a72d4"/><rect x="23" y="13" width="5.500" height="5.500" fill="#f0c030"/><rect x="16" y="20" width="5.500" height="5.500" fill="#d42a4a"/><rect x="23" y="20" width="5.500" height="5.500" fill="#a02ad4"/></svg>
<!-- layout -->
<svg style="left:1392px;top:429px" width="40" height="38" viewBox="0 0 40 38"><rect x="1.200" y="1.200" width="34" height="34" fill="#cfd2ee" stroke="#111" stroke-width="2.400"/><rect x="10" y="5" width="16" height="15" fill="none" stroke="#111" stroke-width="1.600"/><rect x="14" y="9" width="8" height="7" fill="none" stroke="#111" stroke-width="1.600"/><path d="M10 5L3 2M26 5l7-3M10 20l-7 4M26 20l7 4" stroke="#111" stroke-width="1"/><rect x="1.200" y="24" width="34" height="11" fill="#a8a8a8" stroke="#111" stroke-width="2"/><path d="M12.500 24v11M24 24v11" stroke="#111" stroke-width="2"/><path d="M33 34h6l-3 3.500z" fill="#333"/></svg>
<!-- pointer (checked) -->
<div class="abs" style="left:1465px;top:422px;width:53px;height:51px;border:1.500px solid #b2b5b7;border-radius:5px;background:#dededd"></div>
<svg style="left:1482px;top:432px" width="24" height="32" viewBox="0 0 24 32"><path d="M2 1.500v23l5.500-5 4 9.500 4-1.800-4-9.200H19z" fill="#fff" stroke="#111" stroke-width="1.800" stroke-linejoin="round"/></svg>
<!-- window/level -->
<svg style="left:1531px;top:431px" width="34" height="34" viewBox="0 0 34 34"><defs><linearGradient id="rb" x1="0" y1="0" x2="1" y2="0"><stop offset="0" stop-color="#e22"/><stop offset=".25" stop-color="#ee2"/><stop offset=".5" stop-color="#2c2"/><stop offset=".75" stop-color="#22e"/><stop offset="1" stop-color="#c2c"/></linearGradient><linearGradient id="bw" x1="0" y1="0" x2="1" y2="0"><stop offset="0" stop-color="#000"/><stop offset="1" stop-color="#fff"/></linearGradient></defs><rect x="7" y="2" width="25" height="16" fill="#000"/><rect x="9" y="5" width="21" height="5" fill="url(#bw)"/><rect x="9" y="10" width="21" height="6" fill="url(#rb)"/><path d="M8 12l7 10h-4v10H5V22H1z" fill="#2a52b4" stroke="#173078" stroke-width=".800"/></svg>
<div class="dn" style="left:1578px;top:445px"></div>
<svg style="left:1604px;top:429px" width="38" height="36" viewBox="0 0 38 36"><rect x="1" y="1" width="10" height="33" fill="#f0b23a" stroke="#b87a12" stroke-width="1.200"/><path d="M2 5h5M2 9h3M2 13h5M2 17h3M2 21h5M2 25h3M2 29h5" stroke="#7a4c08" stroke-width="1.200"/><path d="M31 9c-8-6-14 2-6 9s2 14-6 9" fill="none" stroke="#8a8fa8" stroke-width="2.600"/><circle cx="22" cy="8" r="2.600" fill="#2a3ab4"/><circle cx="33" cy="14" r="2.600" fill="#2a3ab4"/><circle cx="16" cy="24" r="2.600" fill="#2a3ab4"/><circle cx="28" cy="30" r="2.600" fill="#2a3ab4"/></svg>
<!-- crosshair -->
<svg style="left:1688px;top:430px" width="36" height="36" viewBox="0 0 36 36"><g stroke="#e8962a" fill="none"><path d="M18 1v34M1 18h34" stroke-width="2.400"/><circle cx="18" cy="18" r="5" stroke-width="1.600"/><path d="M18 1l-2.500 6M18 1l2.500 6M18 35l-2.500-6M18 35l2.500-6M1 18l6-2.500M1 18l6 2.500M35 18l-6-2.500M35 18l-6 2.500M13 10h10M13 26h10M10 13v10M26 13v10" stroke-width="1.300"/></g></svg>
<div class="dn" style="left:1736px;top:445px"></div>
<svg style="left:1761px;top:428px" width="40" height="40" viewBox="0 0 40 40"><path d="M1 20l19-9 19 9-19 9z" fill="#6cc04a" opacity=".9"/><path d="M9 3l23 11v23L9 26z" fill="#e23a2a" opacity=".9"/><path d="M30 5L9 16v20l21-11z" fill="#f2d43a" opacity=".85"/><path d="M9 3l11.500 5.500V21L9 16z" fill="#d42a2a"/><path d="M20 11l19 9-10 5-9-4.500z" fill="#52a83a" opacity=".9"/></svg>
<div class="dn" style="left:1812px;top:445px"></div>
<!-- ext manager + python -->
<svg style="left:1862px;top:426px" width="42" height="42" viewBox="0 0 42 42"><defs><linearGradient id="em" x1="0" y1="0" x2="0" y2="1"><stop offset="0" stop-color="#1a6cc0"/><stop offset="1" stop-color="#0d4c98"/></linearGradient></defs><rect x="1" y="1" width="40" height="40" rx="7" fill="url(#em)"/><path d="M9 12h9v-3h4v3h0v6h-3.500a3 3 0 0 0 0 5H22v7H9v-4h4v-4H9z" fill="#a8d0f0"/><path d="M22 10h11v5h-6v4h5v5h-5v4h6v5H22z" fill="#6fd0e8"/></svg>
<svg style="left:1918px;top:426px" width="42" height="42" viewBox="0 0 42 42"><path d="M20.500 1C12 1 12.500 4.800 12.500 4.800V10h8.500v1.500H8S1 10.800 1 21s6 9.800 6 9.800h3.800v-5s-.2-6 6-6h8.400s5.700.1 5.700-5.500V5.600S31.800 1 20.500 1z" fill="#3a78b4"/><circle cx="16" cy="5.700" r="1.700" fill="#fff"/><path d="M21.500 41c8.500 0 8-3.800 8-3.800V32H21v-1.500h13s7 .7 7-9.500-6-9.800-6-9.800h-3.800v5s.2 6-6 6h-8.400s-5.700-.1-5.700 5.500v8.700S10.200 41 21.500 41z" fill="#fcd43c"/><circle cx="26" cy="36.300" r="1.700" fill="#fff"/></svg>
<!-- toolbar 2 icons -->
<svg style="left:184px;top:498px" width="30" height="30" viewBox="0 0 30 30"><rect x="1" y="1" width="28" height="27" fill="#8f98e0" stroke="#111" stroke-width="1.600"/><rect x="5" y="12" width="22" height="16" rx="2" fill="#4a4a4a"/><rect x="7" y="9" width="7" height="4" fill="#4a4a4a"/><circle cx="16.500" cy="20.500" r="6" fill="#111" stroke="#ddd" stroke-width="2"/></svg>
<svg style="left:234px;top:497px" width="38" height="32" viewBox="0 0 38 32"><rect x="6" y="1" width="11" height="11" fill="#f0f0fa" stroke="#666" stroke-width="1"/><path d="M8 4h7M8 7h7" stroke="#99a" stroke-width="1"/><path d="M11 12v5M11 17l-7 7M11 17l7 7" stroke="#555" stroke-width="1.200"/><path d="M1 26l3-5 3 5zM14 26l3-5 3 5z" fill="#d4401a"/><rect x="14" y="11" width="22" height="15" rx="2" fill="#6a6a6a"/><circle cx="26" cy="18.500" r="5" fill="#222" stroke="#ccc" stroke-width="1.600"/></svg>
<svg style="left:291px;top:494px" width="42" height="38" viewBox="0 0 42 38"><rect x="8" y="1" width="12" height="12" fill="#f0f0fa" stroke="#666" stroke-width="1"/><path d="M10 5h8M10 8h8M14 2v10" stroke="#99a" stroke-width="1"/><path d="M12 13v6M12 19l-7 7M12 19l7 7" stroke="#555" stroke-width="1.200"/><path d="M2 28l3-5 3 5zM15 28l3-5 3 5z" fill="#d4401a"/><rect x="24" y="16" width="14" height="13" rx="2" fill="#9a9a9a"/><rect x="18" y="10" width="18" height="14" rx="2" fill="#666"/><circle cx="27" cy="17" r="4.500" fill="#222" stroke="#ccc" stroke-width="1.500"/><path d="M31 33h9l-4.500 4.500z" fill="#555a5e"/></svg>
<!-- ================= LEFT MODULE PANEL ================= -->
<svg style="left:156px;top:552px" width="48" height="49.500" viewBox="0 0 34 35"><circle cx="17" cy="17.500" r="16.300" fill="#b9bfd8" stroke="#8d93ab" stroke-width="1"/><path d="M14 1.500V20.300L33 22.500A16.300 16.300 0 0 0 14 1.500z" fill="#f4f5f9"/><rect x="15.500" y=".500" width="8" height="5.500" fill="#e8dc4a"/><rect x="15.500" y=".500" width="3.300" height="5.500" fill="#5a5a24"/><rect x="16.200" y="5.700" width="7.300" height="4.700" fill="#3a9a3a"/><rect x="23.500" y="5.200" width="5.200" height="10.300" fill="#d86a2a"/><rect x="17.800" y="10.300" width="7.700" height="5.200" fill="#c8321e"/><rect x="28.600" y="10.300" width="4.700" height="5.200" fill="#2a5a9a"/><path d="M13.700 1.600V20.300l2.300-1.700V2z" fill="#5f6680"/><path d="M13.700 20.300l2.300-1.700 17.300-.8.200 4.700z" fill="#9096ae"/><path d="M16 18.600l16.500-.8" stroke="#fff" stroke-width="1.600"/></svg>
<div class="t" style="left:224px;top:555px;font-size:44px;letter-spacing:1px;color:#c3cae0">3D Slicer</div>
<div class="btn" style="left:151px;top:612px;width:611px;height:41px;background:linear-gradient(#f8f8f7,#ececeb)"></div>
<div class="tri-r" style="left:165px;top:625px"></div>
<div class="t q" style="left:190px;top:622px;letter-spacing:-.1px">Help &amp; Acknowledgement</div>
<div class="abs" style="left:151px;top:654px;width:611px;height:22px;border:1.5px solid #c6c8c9;border-top:none;border-radius:0 0 4px 4px;background:#efefee"></div>
<div class="abs" style="left:357px;top:686px;width:234px;height:43px;border:1.5px solid #bcbfc1;border-radius:5px 5px 0 0;background:linear-gradient(#e9e9e8,#e2e3e2)"></div>
<div class="abs" style="left:590px;top:686px;width:127px;height:43px;border:1.5px solid #bcbfc1;border-radius:5px 5px 0 0;background:linear-gradient(#e9e9e8,#e2e3e2)"></div>
<div class="abs" style="left:151px;top:728px;width:611px;height:870px;border:1.5px solid #bcbfc1;border-radius:0 0 4px 4px;background:#f7f7f5"></div>
<div class="abs" style="left:151px;top:683px;width:206px;height:47px;border:1.5px solid #bcbfc1;border-bottom:none;border-radius:6px 6px 0 0;background:#fafaf8"></div>
<div class="t q" style="left:171px;top:696px;letter-spacing:-.1px">Subject hierarchy</div>
<div class="t q" style="left:378px;top:698px">Transform hierarchy</div>
<div class="t q" style="left:611px;top:698px;letter-spacing:-.3px">All nodes</div>
<div class="abs" style="left:157px;top:735px;width:599px;height:777px;border:1.5px solid #b9bcbe;background:#fff"></div>
<div class="abs" style="left:158px;top:736px;width:597px;height:34px;background:linear-gradient(#f6f6f5,#e8e9e8);border-bottom:1.5px solid #c2c4c5"></div>
<div class="abs" style="left:562px;top:736px;width:1.5px;height:34px;background:#c8caca"></div>
<div class="abs" style="left:626px;top:736px;width:1.5px;height:34px;background:#c8caca"></div>
<div class="abs" style="left:689px;top:736px;width:1.5px;height:34px;background:#c8caca"></div>
<div class="t q" style="left:162px;top:743px">Node</div>
<svg style="left:568px;top:748px" width="26" height="12" viewBox="0 0 26 12"><ellipse cx="5" cy="5" rx="4" ry="2.6" fill="#444"/><ellipse cx="18" cy="6" rx="4.5" ry="3" fill="#fff" stroke="#bbb" stroke-width="1"/></svg>
<svg style="left:634px;top:744px" width="18" height="18" viewBox="0 0 18 18"><rect width="18" height="18" fill="#222"/><rect x="2" y="2" width="3.5" height="14" fill="#a33"/><rect x="6" y="2" width="3" height="14" fill="#7a3a9a"/><rect x="9.500" y="2" width="3" height="14" fill="#3a6a3a"/><rect x="13" y="2" width="3" height="14" fill="#3a4a9a"/><path d="M0 6h18M0 12h18" stroke="#222" stroke-width="1"/></svg>
<svg style="left:696px;top:742px" width="24" height="24" viewBox="0 0 32 32"><g fill="none" stroke="#555" stroke-width="1.400"><path d="M10 1L1 10l12 12 9-9zM6.500 4.500l12 12M3.800 7.200l12 12M13 4L4 13M16 7L7 16M19 10l-9 9"/></g><rect x="13" y="13" width="17" height="17" fill="#fff" stroke="#333" stroke-width="2"/><path d="M18.700 13v17M24.300 13v17M13 18.700h17M13 24.300h17" stroke="#333" stroke-width="1.800"/></svg>
<div class="tri-d" style="left:161px;top:781px"></div>
<div class="t q" style="left:183px;top:774px">Scene</div>
<svg style="left:204px;top:804px" width="25" height="21" viewBox="0 0 37 30"><defs><radialGradient id="ig0" cx=".5" cy=".48" r=".55"><stop offset="0" stop-color="#c4dab8"/><stop offset=".55" stop-color="#c4dab8" stop-opacity=".55"/><stop offset="1" stop-color="#5c7d50"/></radialGradient></defs><rect x="1.500" y="1.500" width="34" height="27" rx="10" fill="#5c7d50" stroke="#4a6940" stroke-width="3"/><rect x="5" y="4.500" width="27" height="20" rx="8" fill="url(#ig0)"/><path d="M12 6l13 18M25 6L12 24M7 15h23M18.500 5v20" fill="none" stroke="#c4dab8" stroke-width="1.400" opacity=".7"/></svg>
<div class="t q" style="left:241px;top:805px;letter-spacing:0.21px;">heart</div>
<svg class="ey" style="left:570px;top:805px;height:18px" viewBox="0 0 22 18"><path d="M3 12C6 17.500 16 17.500 19 12" fill="#e4e4e4" stroke="#a8a8a8" stroke-width="1"/><path d="M1.500 10C4 3.500 18 3.500 20.500 10 18 13.500 14.500 14.500 11 14.500S4 13.500 1.500 10z" fill="#2b2b2b"/><path d="M4 6L2 3M7 4.500L6 1.500M11 4V.5M15 4.500l1-3M18 6l2-3M2.500 8L0 6.500M19.500 8L22 6.500" stroke="#2b2b2b" stroke-width="1.300"/><circle cx="9.500" cy="9.500" r="1.400" fill="#fff" opacity=".85"/></svg>
<div class="abs" style="left:632px;top:801.5px;width:26.5px;height:26.5px;background:#cd6e52"></div>
<div class="gi" style="left:700px;top:806px"></div>
<svg style="left:204px;top:836px" width="25" height="21" viewBox="0 0 37 30"><defs><radialGradient id="ig1" cx=".5" cy=".48" r=".55"><stop offset="0" stop-color="#c4dab8"/><stop offset=".55" stop-color="#c4dab8" stop-opacity=".55"/><stop offset="1" stop-color="#5c7d50"/></radialGradient></defs><rect x="1.500" y="1.500" width="34" height="27" rx="10" fill="#5c7d50" stroke="#4a6940" stroke-width="3"/><rect x="5" y="4.500" width="27" height="20" rx="8" fill="url(#ig1)"/><path d="M12 6l13 18M25 6L12 24M7 15h23M18.500 5v20" fill="none" stroke="#c4dab8" stroke-width="1.400" opacity=".7"/></svg>
<div class="t q" style="left:241px;top:837px;letter-spacing:-0.02px;">aorta</div>
<svg class="ey" style="left:570px;top:837px;height:18px" viewBox="0 0 22 18"><path d="M3 12C6 17.500 16 17.500 19 12" fill="#e4e4e4" stroke="#a8a8a8" stroke-width="1"/><path d="M1.500 10C4 3.500 18 3.500 20.500 10 18 13.500 14.500 14.500 11 14.500S4 13.500 1.500 10z" fill="#2b2b2b"/><path d="M4 6L2 3M7 4.500L6 1.500M11 4V.5M15 4.500l1-3M18 6l2-3M2.500 8L0 6.500M19.500 8L22 6.500" stroke="#2b2b2b" stroke-width="1.300"/><circle cx="9.500" cy="9.500" r="1.400" fill="#fff" opacity=".85"/></svg>
<div class="abs" style="left:632px;top:833.5px;width:26.5px;height:26.5px;background:#de614a"></div>
<div class="gi" style="left:700px;top:838px"></div>
<svg style="left:204px;top:868px" width="25" height="21" viewBox="0 0 37 30"><defs><radialGradient id="ig2" cx=".5" cy=".48" r=".55"><stop offset="0" stop-color="#c4dab8"/><stop offset=".55" stop-color="#c4dab8" stop-opacity=".55"/><stop offset="1" stop-color="#5c7d50"/></radialGradient></defs><rect x="1.500" y="1.500" width="34" height="27" rx="10" fill="#5c7d50" stroke="#4a6940" stroke-width="3"/><rect x="5" y="4.500" width="27" height="20" rx="8" fill="url(#ig2)"/><path d="M12 6l13 18M25 6L12 24M7 15h23M18.500 5v20" fill="none" stroke="#c4dab8" stroke-width="1.400" opacity=".7"/></svg>
<div class="t q" style="left:241px;top:869px;letter-spacing:-0.08px;">pulmonary_vein</div>
<svg class="ey" style="left:570px;top:869px;height:18px" viewBox="0 0 22 18"><path d="M3 12C6 17.500 16 17.500 19 12" fill="#e4e4e4" stroke="#a8a8a8" stroke-width="1"/><path d="M1.500 10C4 3.500 18 3.500 20.500 10 18 13.500 14.500 14.500 11 14.500S4 13.500 1.500 10z" fill="#2b2b2b"/><path d="M4 6L2 3M7 4.500L6 1.500M11 4V.5M15 4.500l1-3M18 6l2-3M2.500 8L0 6.500M19.500 8L22 6.500" stroke="#2b2b2b" stroke-width="1.300"/><circle cx="9.500" cy="9.500" r="1.400" fill="#fff" opacity=".85"/></svg>
<div class="abs" style="left:632px;top:865.5px;width:26.5px;height:26.5px;background:#c22e14"></div>
<div class="gi" style="left:700px;top:870px"></div>
<svg style="left:204px;top:900px" width="25" height="21" viewBox="0 0 37 30"><defs><radialGradient id="ig3" cx=".5" cy=".48" r=".55"><stop offset="0" stop-color="#c4dab8"/><stop offset=".55" stop-color="#c4dab8" stop-opacity=".55"/><stop offset="1" stop-color="#5c7d50"/></radialGradient></defs><rect x="1.500" y="1.500" width="34" height="27" rx="10" fill="#5c7d50" stroke="#4a6940" stroke-width="3"/><rect x="5" y="4.500" width="27" height="20" rx="8" fill="url(#ig3)"/><path d="M12 6l13 18M25 6L12 24M7 15h23M18.500 5v20" fill="none" stroke="#c4dab8" stroke-width="1.400" opacity=".7"/></svg>
<div class="t q" style="left:241px;top:901px;letter-spacing:-0.07px;">brachiocephalic_trunk</div>
<svg class="ey" style="left:570px;top:901px;height:18px" viewBox="0 0 22 18"><path d="M3 12C6 17.500 16 17.500 19 12" fill="#e4e4e4" stroke="#a8a8a8" stroke-width="1"/><path d="M1.500 10C4 3.500 18 3.500 20.500 10 18 13.500 14.500 14.500 11 14.500S4 13.500 1.500 10z" fill="#2b2b2b"/><path d="M4 6L2 3M7 4.500L6 1.500M11 4V.5M15 4.500l1-3M18 6l2-3M2.500 8L0 6.500M19.500 8L22 6.500" stroke="#2b2b2b" stroke-width="1.300"/><circle cx="9.500" cy="9.500" r="1.400" fill="#fff" opacity=".85"/></svg>
<div class="abs" style="left:632px;top:897.5px;width:26.5px;height:26.5px;background:#c47e54"></div>
<div class="gi" style="left:700px;top:902px"></div>
<svg style="left:204px;top:932px" width="25" height="21" viewBox="0 0 37 30"><defs><radialGradient id="ig4" cx=".5" cy=".48" r=".55"><stop offset="0" stop-color="#c4dab8"/><stop offset=".55" stop-color="#c4dab8" stop-opacity=".55"/><stop offset="1" stop-color="#5c7d50"/></radialGradient></defs><rect x="1.500" y="1.500" width="34" height="27" rx="10" fill="#5c7d50" stroke="#4a6940" stroke-width="3"/><rect x="5" y="4.500" width="27" height="20" rx="8" fill="url(#ig4)"/><path d="M12 6l13 18M25 6L12 24M7 15h23M18.500 5v20" fill="none" stroke="#c4dab8" stroke-width="1.400" opacity=".7"/></svg>
<div class="t q" style="left:241px;top:933px;letter-spacing:-0.09px;">right_subclavian_artery</div>
<svg class="ey" style="left:570px;top:933px;height:18px" viewBox="0 0 22 18"><path d="M3 12C6 17.500 16 17.500 19 12" fill="#e4e4e4" stroke="#a8a8a8" stroke-width="1"/><path d="M1.500 10C4 3.500 18 3.500 20.500 10 18 13.500 14.500 14.500 11 14.500S4 13.500 1.500 10z" fill="#2b2b2b"/><path d="M4 6L2 3M7 4.500L6 1.500M11 4V.5M15 4.500l1-3M18 6l2-3M2.500 8L0 6.500M19.500 8L22 6.500" stroke="#2b2b2b" stroke-width="1.300"/><circle cx="9.500" cy="9.500" r="1.400" fill="#fff" opacity=".85"/></svg>
<div class="abs" style="left:632px;top:929.5px;width:26.5px;height:26.5px;background:#d8695a"></div>
<div class="gi" style="left:700px;top:934px"></div>
<svg style="left:204px;top:964px" width="25" height="21" viewBox="0 0 37 30"><defs><radialGradient id="ig5" cx=".5" cy=".48" r=".55"><stop offset="0" stop-color="#c4dab8"/><stop offset=".55" stop-color="#c4dab8" stop-opacity=".55"/><stop offset="1" stop-color="#5c7d50"/></radialGradient></defs><rect x="1.500" y="1.500" width="34" height="27" rx="10" fill="#5c7d50" stroke="#4a6940" stroke-width="3"/><rect x="5" y="4.500" width="27" height="20" rx="8" fill="url(#ig5)"/><path d="M12 6l13 18M25 6L12 24M7 15h23M18.500 5v20" fill="none" stroke="#c4dab8" stroke-width="1.400" opacity=".7"/></svg>
<div class="t q" style="left:241px;top:965px;letter-spacing:-0.2px;">left_subclavian_artery</div>
<svg class="ey" style="left:570px;top:965px;height:18px" viewBox="0 0 22 18"><path d="M3 12C6 17.500 16 17.500 19 12" fill="#e4e4e4" stroke="#a8a8a8" stroke-width="1"/><path d="M1.500 10C4 3.500 18 3.500 20.500 10 18 13.500 14.500 14.500 11 14.500S4 13.500 1.500 10z" fill="#2b2b2b"/><path d="M4 6L2 3M7 4.500L6 1.500M11 4V.5M15 4.500l1-3M18 6l2-3M2.500 8L0 6.500M19.500 8L22 6.500" stroke="#2b2b2b" stroke-width="1.300"/><circle cx="9.500" cy="9.500" r="1.400" fill="#fff" opacity=".85"/></svg>
<div class="abs" style="left:632px;top:961.5px;width:26.5px;height:26.5px;background:#d76842"></div>
<div class="gi" style="left:700px;top:966px"></div>
<svg style="left:204px;top:996px" width="25" height="21" viewBox="0 0 37 30"><defs><radialGradient id="ig6" cx=".5" cy=".48" r=".55"><stop offset="0" stop-color="#c4dab8"/><stop offset=".55" stop-color="#c4dab8" stop-opacity=".55"/><stop offset="1" stop-color="#5c7d50"/></radialGradient></defs><rect x="1.500" y="1.500" width="34" height="27" rx="10" fill="#5c7d50" stroke="#4a6940" stroke-width="3"/><rect x="5" y="4.500" width="27" height="20" rx="8" fill="url(#ig6)"/><path d="M12 6l13 18M25 6L12 24M7 15h23M18.500 5v20" fill="none" stroke="#c4dab8" stroke-width="1.400" opacity=".7"/></svg>
<div class="t q" style="left:241px;top:997px;letter-spacing:-0.01px;">right_common_carotid_artery</div>
<svg class="ey" style="left:570px;top:997px;height:18px" viewBox="0 0 22 18"><path d="M3 12C6 17.500 16 17.500 19 12" fill="#e4e4e4" stroke="#a8a8a8" stroke-width="1"/><path d="M1.500 10C4 3.500 18 3.500 20.500 10 18 13.500 14.500 14.500 11 14.500S4 13.500 1.500 10z" fill="#2b2b2b"/><path d="M4 6L2 3M7 4.500L6 1.500M11 4V.5M15 4.500l1-3M18 6l2-3M2.500 8L0 6.500M19.500 8L22 6.500" stroke="#2b2b2b" stroke-width="1.300"/><circle cx="9.500" cy="9.500" r="1.400" fill="#fff" opacity=".85"/></svg>
<div class="abs" style="left:632px;top:993.5px;width:26.5px;height:26.5px;background:#0b6fa4"></div>
<div class="gi" style="left:700px;top:998px"></div>
<svg style="left:204px;top:1028px" width="25" height="21" viewBox="0 0 37 30"><defs><radialGradient id="ig7" cx=".5" cy=".48" r=".55"><stop offset="0" stop-color="#c4dab8"/><stop offset=".55" stop-color="#c4dab8" stop-opacity=".55"/><stop offset="1" stop-color="#5c7d50"/></radialGradient></defs><rect x="1.500" y="1.500" width="34" height="27" rx="10" fill="#5c7d50" stroke="#4a6940" stroke-width="3"/><rect x="5" y="4.500" width="27" height="20" rx="8" fill="url(#ig7)"/><path d="M12 6l13 18M25 6L12 24M7 15h23M18.500 5v20" fill="none" stroke="#c4dab8" stroke-width="1.400" opacity=".7"/></svg>
<div class="t q" style="left:241px;top:1029px;letter-spacing:-0.09px;">left_common_carotid_artery</div>
<svg class="ey" style="left:570px;top:1029px;height:18px" viewBox="0 0 22 18"><path d="M3 12C6 17.500 16 17.500 19 12" fill="#e4e4e4" stroke="#a8a8a8" stroke-width="1"/><path d="M1.500 10C4 3.500 18 3.500 20.500 10 18 13.500 14.500 14.500 11 14.500S4 13.500 1.500 10z" fill="#2b2b2b"/><path d="M4 6L2 3M7 4.500L6 1.500M11 4V.5M15 4.500l1-3M18 6l2-3M2.500 8L0 6.500M19.500 8L22 6.500" stroke="#2b2b2b" stroke-width="1.300"/><circle cx="9.500" cy="9.500" r="1.400" fill="#fff" opacity=".85"/></svg>
<div class="abs" style="left:632px;top:1025.5px;width:26.5px;height:26.5px;background:#0e6a9a"></div>
<div class="gi" style="left:700px;top:1030px"></div>
<svg style="left:204px;top:1060px" width="25" height="21" viewBox="0 0 37 30"><defs><radialGradient id="ig8" cx=".5" cy=".48" r=".55"><stop offset="0" stop-color="#c4dab8"/><stop offset=".55" stop-color="#c4dab8" stop-opacity=".55"/><stop offset="1" stop-color="#5c7d50"/></radialGradient></defs><rect x="1.500" y="1.500" width="34" height="27" rx="10" fill="#5c7d50" stroke="#4a6940" stroke-width="3"/><rect x="5" y="4.500" width="27" height="20" rx="8" fill="url(#ig8)"/><path d="M12 6l13 18M25 6L12 24M7 15h23M18.500 5v20" fill="none" stroke="#c4dab8" stroke-width="1.400" opacity=".7"/></svg>
<div class="t q" style="left:241px;top:1061px;letter-spacing:-0.24px;">left_brachiocephalic_vein</div>
<svg class="ey" style="left:570px;top:1061px;height:18px" viewBox="0 0 22 18"><path d="M3 12C6 17.500 16 17.500 19 12" fill="#e4e4e4" stroke="#a8a8a8" stroke-width="1"/><path d="M1.500 10C4 3.500 18 3.500 20.500 10 18 13.500 14.500 14.500 11 14.500S4 13.500 1.500 10z" fill="#2b2b2b"/><path d="M4 6L2 3M7 4.500L6 1.500M11 4V.5M15 4.500l1-3M18 6l2-3M2.500 8L0 6.500M19.500 8L22 6.500" stroke="#2b2b2b" stroke-width="1.300"/><circle cx="9.500" cy="9.500" r="1.400" fill="#fff" opacity=".85"/></svg>
<div class="abs" style="left:632px;top:1057.5px;width:26.5px;height:26.5px;background:#14a0c2"></div>
<div class="gi" style="left:700px;top:1062px"></div>
<svg style="left:204px;top:1092px" width="25" height="21" viewBox="0 0 37 30"><defs><radialGradient id="ig9" cx=".5" cy=".48" r=".55"><stop offset="0" stop-color="#c4dab8"/><stop offset=".55" stop-color="#c4dab8" stop-opacity=".55"/><stop offset="1" stop-color="#5c7d50"/></radialGradient></defs><rect x="1.500" y="1.500" width="34" height="27" rx="10" fill="#5c7d50" stroke="#4a6940" stroke-width="3"/><rect x="5" y="4.500" width="27" height="20" rx="8" fill="url(#ig9)"/><path d="M12 6l13 18M25 6L12 24M7 15h23M18.500 5v20" fill="none" stroke="#c4dab8" stroke-width="1.400" opacity=".7"/></svg>
<div class="t q" style="left:241px;top:1093px;letter-spacing:-0.14px;">right_brachiocephalic_vein</div>
<svg class="ey" style="left:570px;top:1093px;height:18px" viewBox="0 0 22 18"><path d="M3 12C6 17.500 16 17.500 19 12" fill="#e4e4e4" stroke="#a8a8a8" stroke-width="1"/><path d="M1.500 10C4 3.500 18 3.500 20.500 10 18 13.500 14.500 14.500 11 14.500S4 13.500 1.500 10z" fill="#2b2b2b"/><path d="M4 6L2 3M7 4.500L6 1.500M11 4V.5M15 4.500l1-3M18 6l2-3M2.500 8L0 6.500M19.500 8L22 6.500" stroke="#2b2b2b" stroke-width="1.300"/><circle cx="9.500" cy="9.500" r="1.400" fill="#fff" opacity=".85"/></svg>
<div class="abs" style="left:632px;top:1089.5px;width:26.5px;height:26.5px;background:#1390cc"></div>
<div class="gi" style="left:700px;top:1094px"></div>
<svg style="left:204px;top:1124px" width="25" height="21" viewBox="0 0 37 30"><defs><radialGradient id="ig10" cx=".5" cy=".48" r=".55"><stop offset="0" stop-color="#c4dab8"/><stop offset=".55" stop-color="#c4dab8" stop-opacity=".55"/><stop offset="1" stop-color="#5c7d50"/></radialGradient></defs><rect x="1.500" y="1.500" width="34" height="27" rx="10" fill="#5c7d50" stroke="#4a6940" stroke-width="3"/><rect x="5" y="4.500" width="27" height="20" rx="8" fill="url(#ig10)"/><path d="M12 6l13 18M25 6L12 24M7 15h23M18.500 5v20" fill="none" stroke="#c4dab8" stroke-width="1.400" opacity=".7"/></svg>
<div class="t q" style="left:241px;top:1125px;letter-spacing:-0.13px;">left_atrial_appendage</div>
<svg class="ey" style="left:570px;top:1125px;height:18px" viewBox="0 0 22 18"><path d="M3 12C6 17.500 16 17.500 19 12" fill="#e4e4e4" stroke="#a8a8a8" stroke-width="1"/><path d="M1.500 10C4 3.500 18 3.500 20.500 10 18 13.500 14.500 14.500 11 14.500S4 13.500 1.500 10z" fill="#2b2b2b"/><path d="M4 6L2 3M7 4.500L6 1.500M11 4V.5M15 4.500l1-3M18 6l2-3M2.500 8L0 6.500M19.500 8L22 6.500" stroke="#2b2b2b" stroke-width="1.300"/><circle cx="9.500" cy="9.500" r="1.400" fill="#fff" opacity=".85"/></svg>
<div class="abs" style="left:632px;top:1121.5px;width:26.5px;height:26.5px;background:#10a2c0"></div>
<div class="gi" style="left:700px;top:1126px"></div>
<svg style="left:204px;top:1156px" width="25" height="21" viewBox="0 0 37 30"><defs><radialGradient id="ig11" cx=".5" cy=".48" r=".55"><stop offset="0" stop-color="#c4dab8"/><stop offset=".55" stop-color="#c4dab8" stop-opacity=".55"/><stop offset="1" stop-color="#5c7d50"/></radialGradient></defs><rect x="1.500" y="1.500" width="34" height="27" rx="10" fill="#5c7d50" stroke="#4a6940" stroke-width="3"/><rect x="5" y="4.500" width="27" height="20" rx="8" fill="url(#ig11)"/><path d="M12 6l13 18M25 6L12 24M7 15h23M18.500 5v20" fill="none" stroke="#c4dab8" stroke-width="1.400" opacity=".7"/></svg>
<div class="t q" style="left:241px;top:1157px;letter-spacing:-0.53px;">superior_vena_cava</div>
<svg class="ey" style="left:570px;top:1157px;height:18px" viewBox="0 0 22 18"><path d="M3 12C6 17.500 16 17.500 19 12" fill="#e4e4e4" stroke="#a8a8a8" stroke-width="1"/><path d="M1.500 10C4 3.500 18 3.500 20.500 10 18 13.500 14.500 14.500 11 14.500S4 13.500 1.500 10z" fill="#2b2b2b"/><path d="M4 6L2 3M7 4.500L6 1.500M11 4V.5M15 4.500l1-3M18 6l2-3M2.500 8L0 6.500M19.500 8L22 6.500" stroke="#2b2b2b" stroke-width="1.300"/><circle cx="9.500" cy="9.500" r="1.400" fill="#fff" opacity=".85"/></svg>
<div class="abs" style="left:632px;top:1153.5px;width:26.5px;height:26.5px;background:#1088dc"></div>
<div class="gi" style="left:700px;top:1158px"></div>
<div class="abs" style="left:158px;top:1183px;width:597px;height:32px;background:#308cc6"></div>
<svg style="left:204px;top:1188px" width="25" height="21" viewBox="0 0 37 30"><defs><radialGradient id="ig12" cx=".5" cy=".48" r=".55"><stop offset="0" stop-color="#a8ccd0"/><stop offset=".55" stop-color="#a8ccd0" stop-opacity=".55"/><stop offset="1" stop-color="#4a7f78"/></radialGradient></defs><rect x="1.500" y="1.500" width="34" height="27" rx="10" fill="#4a7f78" stroke="#3a6f86" stroke-width="3"/><rect x="5" y="4.500" width="27" height="20" rx="8" fill="url(#ig12)"/><path d="M12 6l13 18M25 6L12 24M7 15h23M18.500 5v20" fill="none" stroke="#a8ccd0" stroke-width="1.400" opacity=".7"/></svg>
<div class="t q" style="left:241px;top:1189px;letter-spacing:-0.38px;color:#fff;">inferior_vena_cava</div>
<svg class="ey" style="left:570px;top:1189px;height:18px" viewBox="0 0 22 18"><path d="M3 12C6 17.500 16 17.500 19 12" fill="#8abce0" stroke="#5a90b8" stroke-width="1"/><path d="M1.500 10C4 3.500 18 3.500 20.500 10 18 13.500 14.500 14.500 11 14.500S4 13.500 1.500 10z" fill="#1a3f60"/><path d="M4 6L2 3M7 4.500L6 1.500M11 4V.5M15 4.500l1-3M18 6l2-3M2.500 8L0 6.500M19.500 8L22 6.500" stroke="#1a3f60" stroke-width="1.300"/><circle cx="9.500" cy="9.500" r="1.400" fill="#fff" opacity=".85"/></svg>
<div class="abs" style="left:632px;top:1183px;width:27px;height:32px;background:#1590d0"></div>
<div class="gi" style="left:700px;top:1190px;opacity:.25;background-color:transparent"></div>
<div class="cb" style="left:157px;top:1528px"></div>
<svg style="left:160px;top:1531px" width="18" height="18" viewBox="0 0 18 18"><path d="M2.500 9l4.500 6 8.500-13" fill="none" stroke="#111" stroke-width="2.600"/></svg>
<div class="t q" style="left:188px;top:1529px;letter-spacing:-.05px">Show transforms</div>
<div class="cb" style="left:360px;top:1528px"></div>
<div class="t q" style="left:391px;top:1529px;letter-spacing:-.5px">Show MRML ID's</div>
<svg style="left:718px;top:1523px" width="36" height="36" viewBox="0 0 36 36"><circle cx="18" cy="18" r="17" fill="#fce8c0" stroke="#f09a1a" stroke-width="1.500"/><circle cx="18" cy="18" r="13.500" fill="#f6a21e" stroke="#fff" stroke-width="1.500"/><text x="18" y="26" text-anchor="middle" font-family="Liberation Sans,sans-serif" font-weight="700" font-size="22" fill="#fff">?</text></svg>
<div class="abs" style="left:157px;top:1585px;width:599px;height:7px;border:1.5px solid #c9cbcb;border-top:none;border-radius:0 0 4px 4px"></div>
<div class="tri-r" style="left:165px;top:1576px"></div>
<div class="t q" style="left:188px;top:1572px;letter-spacing:.1px">Subject hierarchy item information</div>
<div class="t q" style="left:150px;top:1618px;letter-spacing:-.3px">Filter:</div>
<div class="abs" style="left:211px;top:1609px;width:551px;height:39px;border:1.5px solid #b9bcbe;border-radius:4px;background:#fff"></div>
<div class="abs" style="left:151px;top:1675px;width:611px;height:7px;border:1.5px solid #c9cbcb;border-top:none;border-radius:0 0 4px 4px"></div>
<div class="tri-r" style="left:159px;top:1666px"></div>
<div class="t q" style="left:181px;top:1662px;letter-spacing:.15px">MRML node informatior</div>
<div class="btn" style="left:151px;top:1694px;width:611px;height:40px;background:linear-gradient(#f8f8f7,#ececeb)"></div>
<div class="tri-d" style="left:163px;top:1710px"></div>
<div class="t q" style="left:190px;top:1703px;letter-spacing:-.3px">Data Probe</div>
<div class="cb" style="left:167px;top:1764px"></div>
<div class="t q" style="left:198px;top:1766px;letter-spacing:-.5px">Show Zoomed Slice</div>
<div class="t q" style="left:176px;top:1820px;font-size:19px">L</div>
<div class="t q" style="left:176px;top:1854px;font-size:19px">F</div>
<div class="t q" style="left:176px;top:1888px;font-size:19px">B</div>
<!-- ================= SLICE / 3D VIEWS ================= -->
<div class="abs" style="left:773px;top:546px;width:2076px;height:1392px;background:#000"></div>
<div class="abs" style="left:1811px;top:598px;width:1038px;height:643px;background:linear-gradient(#7478be 0,#8a8dcb 30%,#a3a5da 60%,#bcbde6 88%,#c3c4ea 100%)"></div>
<div class="abs" style="left:1811px;top:598px;width:2px;height:643px;background:#c7c7e6"></div>
<div class="abs" style="left:1811px;top:1295px;width:2px;height:643px;background:#e8e8e8"></div>
<div class="abs" style="left:773px;top:546px;width:1038px;height:52px;background:linear-gradient(#ee4e36 0,#ee4e36 4%,#d8432c 16%,#d8432c 26%,#f9523a 55%,#f9523a 86%,#e2472f 100%)"></div>
<div class="abs" style="left:1811px;top:546px;width:1038px;height:52px;background:linear-gradient(#8a96f0 0,#8a96f0 4%,#6672cc 16%,#6672cc 26%,#7a88ee 55%,#7a88ee 86%,#6a78dc 100%)"></div>
<div class="abs" style="left:773px;top:1241px;width:1038px;height:54px;background:linear-gradient(#a6e08e 0,#a6e08e 4%,#68a84c 16%,#68a84c 26%,#74b856 55%,#74b856 86%,#78bc5a 100%)"></div>
<div class="abs" style="left:1811px;top:1241px;width:1038px;height:54px;background:linear-gradient(#f8f0a0 0,#f8f0a0 4%,#d8be3a 16%,#d8be3a 26%,#f5de50 55%,#f5de50 86%,#e2ca42 100%)"></div>
<svg style="left:783px;top:563px" width="34" height="16" viewBox="0 0 34 16"><path d="M1 8h12" stroke="#3a0500" stroke-width="1.200" opacity=".7"/><path d="M12 3c3 0 4 2 6 3h8c1-2 2-4 4-4v12c-2 0-3-2-4-4h-8c-2 1-3 3-6 3-2-2-2-8 0-10z" fill="#3a0500"/></svg>
<div class="t" style="left:836px;top:563px;font-size:19.500px;color:#3a0500">R</div>
<svg style="left:871px;top:558px" width="28" height="28" viewBox="0 0 28 28"><rect x="4" y="4" width="20" height="20" fill="#b83020"/><rect x="4" y="4" width="10" height="10" fill="#fff" opacity=".45"/><rect x="14" y="4" width="10" height="20" fill="#000" opacity=".35"/><path d="M6.500 4v20M9 4v20M11.500 4v20M14 4v20M16.500 4v20M19 4v20M21.500 4v20M4 6.500h20M4 9h20M4 11.500h20M4 14h20M4 16.500h20M4 19h20M4 21.500h20" stroke="#3a0500" stroke-width=".7" opacity=".6"/><path d="M14 0v3M14 25v3M0 14h3M25 14h3" stroke="#3a0500" stroke-width="1.600"/></svg>
<svg style="left:929px;top:559px" width="26" height="26" viewBox="0 0 26 26"><rect x="1.200" y="1.200" width="23.600" height="23.600" fill="none" stroke="#3a0500" stroke-width="2.400"/><rect x="1" y="1" width="24" height="6.500" fill="#3a0500"/></svg>
<svg style="left:783px;top:1260px" width="34" height="16" viewBox="0 0 34 16"><path d="M1 8h12" stroke="#0a2a02" stroke-width="1.200" opacity=".7"/><path d="M12 3c3 0 4 2 6 3h8c1-2 2-4 4-4v12c-2 0-3-2-4-4h-8c-2 1-3 3-6 3-2-2-2-8 0-10z" fill="#0a2a02"/></svg>
<div class="t" style="left:836px;top:1260px;font-size:19.500px;color:#0a2a02">G</div>
<svg style="left:871px;top:1255px" width="28" height="28" viewBox="0 0 28 28"><rect x="4" y="4" width="20" height="20" fill="#3f8a2c"/><rect x="4" y="4" width="10" height="10" fill="#fff" opacity=".45"/><rect x="14" y="4" width="10" height="20" fill="#000" opacity=".35"/><path d="M6.500 4v20M9 4v20M11.500 4v20M14 4v20M16.500 4v20M19 4v20M21.500 4v20M4 6.500h20M4 9h20M4 11.500h20M4 14h20M4 16.500h20M4 19h20M4 21.500h20" stroke="#0a2a02" stroke-width=".7" opacity=".6"/><path d="M14 0v3M14 25v3M0 14h3M25 14h3" stroke="#0a2a02" stroke-width="1.600"/></svg>
<svg style="left:929px;top:1256px" width="26" height="26" viewBox="0 0 26 26"><rect x="1.200" y="1.200" width="23.600" height="23.600" fill="none" stroke="#0a2a02" stroke-width="2.400"/><rect x="1" y="1" width="24" height="6.500" fill="#0a2a02"/></svg>
<div class="abs" style="left:990px;top:568px;width:666px;height:8px;border:1.500px solid #2a0a04;border-radius:4px;background:#e8e6e4"></div>
<div class="abs" style="left:982px;top:561px;width:15px;height:21px;border:1.500px solid #2a0a04;border-radius:5px;background:#fcfcfc"></div>
<div class="t q" style="left:1667px;top:561px;letter-spacing:-.5px;color:#4a0800">S: -2.5000mm</div>
<div class="abs" style="left:990px;top:1265.5px;width:300px;height:8px;border:1.500px solid #0c2a04;border-radius:4px;background:#e8e6e4"></div>
<div class="abs" style="left:982px;top:1258.5px;width:15px;height:21px;border:1.500px solid #0c2a04;border-radius:5px;background:#fcfcfc"></div>
<div class="abs" style="left:2100px;top:1265px;width:594px;height:8px;border:1.500px solid #2a2404;border-radius:4px;background:#e8e6e4"></div>
<div class="abs" style="left:2100px;top:1265px;width:368px;height:8px;border:1.500px solid #1a2a3a;border-radius:4px 0 0 4px;background:#3d8ed0"></div>
<div class="abs" style="left:2459px;top:1258px;width:16px;height:22px;border:1.500px solid #2a2404;border-radius:5px;background:#fcfcfc"></div>
<div class="t q" style="left:2705px;top:1259.5px;letter-spacing:-.4px;color:#3a3204">L: 0.0001mm</div>
<svg style="left:1824px;top:563px" width="34" height="16" viewBox="0 0 34 16"><path d="M1 8h12" stroke="#1a1f48" stroke-width="1.200" opacity=".7"/><path d="M12 3c3 0 4 2 6 3h8c1-2 2-4 4-4v12c-2 0-3-2-4-4h-8c-2 1-3 3-6 3-2-2-2-8 0-10z" fill="#1a1f48"/></svg>
<div class="t" style="left:1875px;top:563px;font-size:19.500px;color:#1a1f48">1</div>
<svg style="left:1909px;top:557px" width="30" height="30" viewBox="0 0 30 30"><rect x="3" y="3" width="24" height="24" fill="#8e9af0"/><path d="M15 0v30M0 15h30" stroke="#0c1030" stroke-width="1.600"/><rect x="8" y="8" width="14" height="14" fill="none" stroke="#0c1030" stroke-width="1.800"/><rect x="12" y="12" width="6" height="6" fill="none" stroke="#0c1030" stroke-width="1.400"/></svg>
<svg style="left:1968px;top:559px" width="26" height="26" viewBox="0 0 26 26"><rect x="1.200" y="1.200" width="23.600" height="23.600" fill="none" stroke="#05071a" stroke-width="2.400"/><rect x="1" y="1" width="24" height="6.500" fill="#05071a"/></svg>
<svg style="left:2150px;top:640px" width="400" height="560" viewBox="0 0 1109 1552">
<defs>
<radialGradient id="hs" cx=".6" cy=".55" r=".62"><stop offset="0" stop-color="#cf8864"/><stop offset=".55" stop-color="#c27855"/><stop offset=".85" stop-color="#a9603f"/><stop offset="1" stop-color="#7c4430"/></radialGradient>
<linearGradient id="ht" x1="0" y1="0" x2="1" y2="0"><stop offset="0" stop-color="#9c5a40"/><stop offset=".35" stop-color="#c47c5a"/><stop offset=".75" stop-color="#bd7452"/><stop offset="1" stop-color="#8a4c36"/></linearGradient>
<linearGradient id="ao" x1="0" y1="0" x2="1" y2="0"><stop offset="0" stop-color="#c9543e"/><stop offset=".3" stop-color="#e26a52"/><stop offset=".7" stop-color="#d9604a"/><stop offset="1" stop-color="#a84432"/></linearGradient>
<linearGradient id="ao2" x1="0" y1="0" x2="1" y2="1"><stop offset="0" stop-color="#e46c54"/><stop offset=".6" stop-color="#d25a44"/><stop offset="1" stop-color="#a04030"/></linearGradient>
<linearGradient id="bl" x1="0" y1="0" x2="1" y2="0"><stop offset="0" stop-color="#1676a8"/><stop offset=".35" stop-color="#1c9cd6"/><stop offset=".7" stop-color="#158ac4"/><stop offset="1" stop-color="#0c5e8c"/></linearGradient>
<linearGradient id="cy" x1="0" y1="0" x2="1" y2="1"><stop offset="0" stop-color="#24b4d4"/><stop offset=".6" stop-color="#17a0c2"/><stop offset="1" stop-color="#0f7a98"/></linearGradient>
<linearGradient id="dbl" x1="0" y1="0" x2="1" y2="0"><stop offset="0" stop-color="#0f6a96"/><stop offset=".45" stop-color="#157eb0"/><stop offset="1" stop-color="#0b557c"/></linearGradient>
</defs>
<g fill="none" stroke="#e436e4" stroke-width="4.500">
<path d="M78 155L735 98 878 180 297 245Z"/><path d="M120 1402L755 1445 893 1345 318 1315Z"/><path d="M78 155L120 1402M297 245L318 1315M735 98L755 1445M878 180L893 1345"/>
</g>
<g transform="translate(110.900 83.200) scale(.4467)">
<path d="M160 345C170 300 260 310 330 290 400 265 520 250 580 290L600 350C520 340 420 360 340 385 270 405 160 400 160 345Z" fill="#d9694f"/>
<path d="M1060 380L1085 420 1030 600 1020 740 920 760 940 620Z" fill="#cf6038"/>
<path d="M1060 330C1100 250 1200 225 1300 235 1400 235 1520 260 1550 320 1560 380 1520 410 1470 395 1420 350 1330 310 1250 315 1180 325 1120 360 1080 420Z" fill="#d5673f"/>
<path d="M580 210C600 195 680 195 695 215L745 520 640 540Z" fill="url(#dbl)"/>
<path d="M965 185C990 165 1070 170 1085 190L1060 345 930 600 905 770 800 790 830 640 950 420Z" fill="url(#dbl)"/>
<path d="M640 530L745 520 760 600 660 650Z" fill="#d09a60"/>
<path d="M500 400C520 360 610 360 625 400L660 650 640 870 590 870 570 700Z" fill="#1e9bd0"/>
<path d="M578 860L660 880 625 1100 610 1420 578 1420Z" fill="url(#bl)"/>
<path d="M740 790L790 770 800 810 750 830Z" fill="#d09a60"/>
<path d="M990 380C1020 340 1080 350 1090 400 1095 430 1080 450 1060 480L940 640 720 850C680 880 620 850 610 790 605 750 620 720 650 690L820 540Z" fill="url(#cy)"/>
<path d="M1130 1000L1215 1000 1250 1552 1180 1552Z" fill="#c2523c"/>
<path d="M690 1552L640 1380 610 1150 640 950 700 850 800 810 950 760 1060 745 1130 760 1180 850 1210 1000 1225 1100 1100 1040 1000 1000 940 1030 880 1120 820 1250 770 1420 750 1552Z" fill="url(#ao2)"/>
<path d="M1040 770C1100 800 1140 860 1150 960" fill="none" stroke="#9c3e2c" stroke-width="12" opacity=".25"/>
<path d="M1110 1060L1200 1080 1290 1160 1340 1250 1385 1400 1370 1460 1330 1450 1280 1330 1220 1230 1130 1180Z" fill="#d28868"/>
<path d="M1110 1210L1180 1195 1240 1260 1235 1340 1170 1360 1120 1300Z" fill="#c8391e"/>
<path d="M530 1290L585 1270 590 1400 545 1390Z" fill="#c8391e"/>
<path d="M1100 1310L1130 1330 1200 1500 1170 1540 1100 1450Z" fill="#19a5c8"/>
<path d="M1200 1470L1310 1480 1330 1552 1210 1552Z" fill="#c8391e"/>
</g>
<g transform="translate(110.900 665.400) scale(.4467)">
<path d="M1150 0L1250 0 1260 170 1200 180Z" fill="#c2523c"/>
<path d="M1250 0L1370 0 1390 100 1370 160 1320 150 1280 60Z" fill="#d28868"/>
<path d="M1090 0L1140 30 1210 200 1170 230 1100 150Z" fill="#19a5c8"/>
<path d="M1200 180L1290 170 1340 260 1320 310 1270 280 1230 230Z" fill="#c8391e"/>
<path d="M530 0L590 0 600 90 545 80Z" fill="#c8391e"/>
<path d="M480 150L545 130 540 220 490 215Z" fill="#c8391e"/>
<path d="M600 0L800 0 770 130 740 200 700 235 660 170 620 60Z" fill="#dc6048"/>
<ellipse cx="730" cy="1550" rx="70" ry="22" fill="#1587be"/><ellipse cx="890" cy="1550" rx="90" ry="30" fill="#d25a44"/>
<path d="M535 690L760 765C760 820 790 900 830 990 860 1080 860 1200 850 1300 845 1400 820 1500 800 1552L660 1552C640 1450 620 1300 640 1150 660 1050 640 950 600 860 570 800 545 750 535 690Z" fill="url(#bl)"/>
<path d="M940 780L1180 785C1185 900 1170 1050 1130 1200 1090 1350 1040 1450 980 1552L800 1552C840 1400 890 1250 910 1100 930 950 935 860 940 780Z" fill="url(#ao)"/>
<path d="M800 30L830 -73 900 -203 960 -263 1100 -263 1150 -243 1130 -103 1095 0 1085 110 1110 200C1200 215 1290 290 1335 385 1375 480 1370 600 1300 700 1230 780 1100 795 1000 785 900 775 760 765 640 720 600 700 540 690 500 680 440 620 400 520 415 420 430 320 490 180 560 130 600 100 640 120 660 170L700 235C740 220 780 120 800 30Z" fill="url(#hs)"/>
<path d="M905 -180h215M875 -120h250M850 -60h270M830 0h265M815 60h270M850 120h240" stroke="#6c3a28" stroke-width="10" opacity=".2"/>
<path d="M660 260C580 320 520 440 520 560 525 620 540 670 560 695" fill="none" stroke="#7c4430" stroke-width="14" opacity=".45"/>
<path d="M560 130C490 180 430 320 415 420 400 520 440 620 500 680L545 690C515 600 520 440 600 300 630 260 650 230 660 170 640 120 600 100 560 130Z" fill="#a9684a" opacity=".55"/>
<path d="M1110 210C1180 250 1260 300 1300 360M1090 260C1160 290 1230 330 1280 390M1080 310C1140 330 1200 360 1250 410" fill="none" stroke="#7c4430" stroke-width="9" opacity=".3"/>
</g>
<g fill="#fff" font-family="Liberation Sans,sans-serif" font-size="76"><text x="462" y="108">S</text><text x="112" y="806">R</text><text x="888" y="806">L</text><text x="502" y="1496">I</text></g>
</svg>
<div class="abs" style="left:150px;top:1938px;width:2699px;height:60px;background:#eeefee"></div>
<div class="btn" style="left:2761px;top:1944px;width:52px;height:50px"></div>
<svg style="left:2767px;top:1949px" width="40" height="40" viewBox="0 0 40 40"><circle cx="20" cy="20" r="19" fill="#e8121c"/><path d="M12 12l16 16M28 12L12 28" stroke="#fff" stroke-width="4.500"/></svg>
<svg style="left:2828px;top:1978px" width="18" height="18" viewBox="0 0 18 18"><g fill="#b8baba"><rect x="14" y="2" width="2" height="2"/><rect x="14" y="8" width="2" height="2"/><rect x="8" y="8" width="2" height="2"/><rect x="14" y="14" width="2" height="2"/><rect x="8" y="14" width="2" height="2"/><rect x="2" y="14" width="2" height="2"/></g></svg>
<!-- ================= SAVE DIALOG ================= -->
<div class="abs" style="left:1136px;top:800px;width:1058px;height:547px;background:#eff0ef"></div>
<div class="abs" style="left:1136px;top:800px;width:1058px;height:46px;background:linear-gradient(#e4e6e6,#dfe1e1)"></div>
<svg style="left:1147px;top:808px" width="24" height="28" viewBox="0 0 24 28"><path d="M7 1h7v4h4l-7.500 7L3 5h4z" fill="#e0622a" stroke="#8a3410" stroke-width=".8"/><path d="M1 14h8l2-3h5l2 3h5v12H1z" fill="#f0d458" stroke="#6a5a18" stroke-width="1.400"/></svg>
<div class="t q" style="left:1511px;top:813.4px;letter-spacing:.3px;color:#2a2e32">Save Scene and Unsaved Data</div>
<div class="t" style="left:2041px;top:808px;font-size:28px;color:#2a2e32">?</div>
<svg style="left:2078px;top:814px" width="104" height="20" viewBox="0 0 104 20"><path d="M2 4l9.500 9.500L21 4M42 13.500L51.500 4 61 13.500M84 2l15 15M99 2L84 17" fill="none" stroke="#2a2e32" stroke-width="2"/></svg>
<div class="btn" style="left:1146px;top:857px;width:66px;height:64px"></div>
<div class="btn" style="left:1218px;top:857px;width:66px;height:64px"></div>
<div class="btn" style="left:1291px;top:857px;width:66px;height:64px"></div>
<svg style="left:1152px;top:862px" width="54" height="54" viewBox="0 0 54 54"><rect x="1.200" y="1.200" width="51.600" height="51.600" fill="#fff" stroke="#111" stroke-width="2.400"/><rect x="4" y="4" width="12" height="12" fill="#dde" stroke="#555" stroke-width="1.200"/><path d="M6 10l3 4 5-8" fill="none" stroke="#222" stroke-width="1.800"/><rect x="21" y="8" width="12" height="16" fill="#e6e8fa" stroke="#778" stroke-width="1"/><path d="M23 12h8M23 15h8M23 18h8M23 21h8" stroke="#88a" stroke-width="1"/><rect x="7" y="7" width="40" height="28" fill="none" stroke="#999" stroke-width="1" stroke-dasharray="2 2"/><path d="M27 24v6M27 30L11 42M27 30l-6 12M27 30l6 12M27 30l16 12" fill="none" stroke="#666" stroke-width="1.600"/><path d="M15 31l4-3v6zM25 33l2-4 2 4zM39 31l-4-3v6z" fill="#d4401a"/></svg>
<svg style="left:1224px;top:862px" width="54" height="54" viewBox="0 0 54 54"><rect x="1.200" y="1.200" width="51.600" height="51.600" fill="#fff" stroke="#111" stroke-width="2.400"/><rect x="4" y="4" width="12" height="12" fill="#dde" stroke="#555" stroke-width="1.200"/><path d="M6 10l3 4 5-8" fill="none" stroke="#222" stroke-width="1.800"/><rect x="21" y="8" width="12" height="16" fill="#e6e8fa" stroke="#778" stroke-width="1"/><path d="M23 12h8M23 15h8M23 18h8M23 21h8" stroke="#88a" stroke-width="1"/><rect x="10" y="27" width="38" height="10" fill="none" stroke="#999" stroke-width="1" stroke-dasharray="2 2"/><path d="M27 24v6M27 30L11 42M27 30l-6 12M27 30l6 12M27 30l16 12" fill="none" stroke="#666" stroke-width="1.600"/><path d="M15 31l4-3v6zM25 33l2-4 2 4zM39 31l-4-3v6z" fill="#d4401a"/></svg>
<svg style="left:1299px;top:864px" width="50" height="50" viewBox="0 0 50 50"><path d="M24 14C18 4 8 6 12 12c3 4 8 3 12 2zM24 14C30 4 40 6 36 12c-3 4-8 3-12 2z" fill="none" stroke="#222" stroke-width="3"/><rect x="2" y="14" width="46" height="10" rx="2" fill="#b9b2f2" stroke="#55508a" stroke-width="1"/><rect x="5" y="24" width="40" height="22" rx="2" fill="#c3bcf6" stroke="#55508a" stroke-width="1"/><rect x="21" y="14" width="6" height="32" fill="#222"/><rect x="27" y="24" width="18" height="22" fill="#222"/><g><rect x="29" y="26" width="4" height="4" fill="#d33"/><rect x="34" y="26" width="4" height="4" fill="#e93"/><rect x="39" y="26" width="4" height="4" fill="#dd3"/><rect x="29" y="31" width="4" height="4" fill="#3a3"/><rect x="34" y="31" width="4" height="4" fill="#d33"/><rect x="39" y="31" width="4" height="4" fill="#e93"/><rect x="29" y="36" width="4" height="4" fill="#36c"/><rect x="34" y="36" width="4" height="4" fill="#3a3"/><rect x="39" y="36" width="4" height="4" fill="#d33"/><rect x="29" y="41" width="4" height="4" fill="#36c"/><rect x="34" y="41" width="4" height="4" fill="#36c"/><rect x="39" y="41" width="4" height="4" fill="#3a3"/></g></svg>
<div class="cb" style="left:2009px;top:877px"></div>
<div class="t q" style="left:2041px;top:878.4px;letter-spacing:-.16px">Show options</div>
<div class="abs" style="left:1146px;top:928px;width:1038px;height:349px;border:1.500px solid #b9bcbe;background:#fff"></div>
<div class="abs" style="left:1147px;top:929px;width:1011px;height:34px;background:linear-gradient(#f7f7f6,#e9eae9);border-bottom:1.500px solid #bfc1c2"></div>
<div class="abs" style="left:1505px;top:929px;width:1.500px;height:347px;background:#cfd1d1"></div>
<div class="abs" style="left:1830px;top:929px;width:1.500px;height:347px;background:#cfd1d1"></div>
<div class="abs" style="left:2157px;top:929px;width:1.500px;height:34px;background:#cfd1d1"></div>
<div class="cb" style="left:1151px;top:934px;width:22px;height:22px"></div>
<svg style="left:1153px;top:936px" width="18" height="18" viewBox="0 0 18 18"><path d="M2.500 9l4.500 6.500 8.500-14" fill="none" stroke="#111" stroke-width="2.600"/></svg>
<div class="t q" style="left:1294px;top:935.7px;letter-spacing:-.45px">File Name</div>
<div class="t q" style="left:1616px;top:935.7px;letter-spacing:-.3px">File Format</div>
<div class="t q" style="left:1952px;top:935.7px;letter-spacing:0px">Directory</div>
<div class="abs" style="left:1147px;top:973px;width:1011px;height:1.500px;background:#d4d6d6"></div>
<div class="abs" style="left:1509px;top:964px;width:318px;height:6px;border:1.500px solid #b9bcbe;border-top:none;border-radius:0 0 5px 5px;background:#e9eaea"></div>
<div class="abs" style="left:1832px;top:964px;width:284px;height:5px;border:1.500px solid #b9bcbe;border-top:none;border-radius:0 0 4px 4px;background:#fff"></div>
<div class="abs" style="left:2119px;top:964px;width:37px;height:6px;border:1.500px solid #b9bcbe;border-top:none;border-radius:0 0 5px 5px;background:#e9eaea"></div>
<div class="abs" style="left:1147px;top:1023.9px;width:1011px;height:1.500px;background:#d4d6d6"></div>
<div class="cb" style="left:1153px;top:987.2px;width:23px;height:23px;border-color:#c4c6c8"></div>
<svg style="left:1155px;top:989.2px" width="18" height="18" viewBox="0 0 18 18"><path d="M2.500 9l4.500 6.500 8.500-14" fill="none" stroke="#111" stroke-width="2.600"/></svg>
<div class="t q" style="left:1186px;top:988.2px;letter-spacing:-0.03px">left_common_carotid_artery.stl</div>
<div class="btn" style="left:1508px;top:976.0px;width:319px;height:46px;background:linear-gradient(#fafaf9,#e9eaea)"></div>
<div class="t q" style="left:1515px;top:988.2px;letter-spacing:-.08px">Stereolithography Mesh (.stl)</div>
<div class="dn" style="left:1804px;top:995.7px"></div>
<div class="abs" style="left:1832px;top:977.0px;width:284px;height:44px;border:1.500px solid #b9bcbe;border-radius:4px;background:#fff"></div>
<div class="t q" style="left:1833px;top:988.2px;letter-spacing:-.05px">r/Documents/anatomy_scene</div>
<div class="btn" style="left:2119px;top:976.0px;width:37px;height:46px"></div>
<div class="t q" style="left:2128px;top:988.2px">...</div>
<div class="abs" style="left:1147px;top:1074.3px;width:1011px;height:1.500px;background:#d4d6d6"></div>
<div class="cb" style="left:1153px;top:1037.6px;width:23px;height:23px;border-color:#c4c6c8"></div>
<svg style="left:1155px;top:1039.6px" width="18" height="18" viewBox="0 0 18 18"><path d="M2.500 9l4.500 6.500 8.500-14" fill="none" stroke="#111" stroke-width="2.600"/></svg>
<div class="t q" style="left:1186px;top:1038.6px;letter-spacing:-0.16px">left_brachiocephalic_vein.stl</div>
<div class="btn" style="left:1508px;top:1026.4px;width:319px;height:46px;background:linear-gradient(#fafaf9,#e9eaea)"></div>
<div class="t q" style="left:1515px;top:1038.6px;letter-spacing:-.08px">Stereolithography Mesh (.stl)</div>
<div class="dn" style="left:1804px;top:1046.1px"></div>
<div class="abs" style="left:1832px;top:1027.4px;width:284px;height:44px;border:1.500px solid #b9bcbe;border-radius:4px;background:#fff"></div>
<div class="t q" style="left:1833px;top:1038.6px;letter-spacing:-.05px">r/Documents/anatomy_scene</div>
<div class="btn" style="left:2119px;top:1026.4px;width:37px;height:46px"></div>
<div class="t q" style="left:2128px;top:1038.6px">...</div>
<div class="abs" style="left:1147px;top:1124.7px;width:1011px;height:1.500px;background:#d4d6d6"></div>
<div class="cb" style="left:1153px;top:1088.0px;width:23px;height:23px;border-color:#c4c6c8"></div>
<svg style="left:1155px;top:1090.0px" width="18" height="18" viewBox="0 0 18 18"><path d="M2.500 9l4.500 6.500 8.500-14" fill="none" stroke="#111" stroke-width="2.600"/></svg>
<div class="t q" style="left:1186px;top:1089.0px;letter-spacing:-0.1px">right_brachiocephalic_vein.stl</div>
<div class="btn" style="left:1508px;top:1076.8px;width:319px;height:46px;background:linear-gradient(#fafaf9,#e9eaea)"></div>
<div class="t q" style="left:1515px;top:1089.0px;letter-spacing:-.08px">Stereolithography Mesh (.stl)</div>
<div class="dn" style="left:1804px;top:1096.5px"></div>
<div class="abs" style="left:1832px;top:1077.8px;width:284px;height:44px;border:1.500px solid #b9bcbe;border-radius:4px;background:#fff"></div>
<div class="t q" style="left:1833px;top:1089.0px;letter-spacing:-.05px">r/Documents/anatomy_scene</div>
<div class="btn" style="left:2119px;top:1076.8px;width:37px;height:46px"></div>
<div class="t q" style="left:2128px;top:1089.0px">...</div>
<div class="abs" style="left:1147px;top:1175.1px;width:1011px;height:1.500px;background:#d4d6d6"></div>
<div class="cb" style="left:1153px;top:1138.4px;width:23px;height:23px;border-color:#c4c6c8"></div>
<svg style="left:1155px;top:1140.4px" width="18" height="18" viewBox="0 0 18 18"><path d="M2.500 9l4.500 6.500 8.500-14" fill="none" stroke="#111" stroke-width="2.600"/></svg>
<div class="t q" style="left:1186px;top:1139.4px;letter-spacing:-0.09px">left_atrial_appendage.stl</div>
<div class="btn" style="left:1508px;top:1127.2px;width:319px;height:46px;background:linear-gradient(#fafaf9,#e9eaea)"></div>
<div class="t q" style="left:1515px;top:1139.4px;letter-spacing:-.08px">Stereolithography Mesh (.stl)</div>
<div class="dn" style="left:1804px;top:1146.9px"></div>
<div class="abs" style="left:1832px;top:1128.2px;width:284px;height:44px;border:1.500px solid #b9bcbe;border-radius:4px;background:#fff"></div>
<div class="t q" style="left:1833px;top:1139.4px;letter-spacing:-.05px">r/Documents/anatomy_scene</div>
<div class="btn" style="left:2119px;top:1127.2px;width:37px;height:46px"></div>
<div class="t q" style="left:2128px;top:1139.4px">...</div>
<div class="abs" style="left:1147px;top:1225.5px;width:1011px;height:1.500px;background:#d4d6d6"></div>
<div class="cb" style="left:1153px;top:1188.8px;width:23px;height:23px;border-color:#c4c6c8"></div>
<svg style="left:1155px;top:1190.8px" width="18" height="18" viewBox="0 0 18 18"><path d="M2.500 9l4.500 6.500 8.500-14" fill="none" stroke="#111" stroke-width="2.600"/></svg>
<div class="t q" style="left:1186px;top:1189.8px;letter-spacing:-0.37px">superior_vena_cava.stl</div>
<div class="btn" style="left:1508px;top:1177.6px;width:319px;height:46px;background:linear-gradient(#fafaf9,#e9eaea)"></div>
<div class="t q" style="left:1515px;top:1189.8px;letter-spacing:-.08px">Stereolithography Mesh (.stl)</div>
<div class="dn" style="left:1804px;top:1197.3px"></div>
<div class="abs" style="left:1832px;top:1178.6px;width:284px;height:44px;border:1.500px solid #b9bcbe;border-radius:4px;background:#fff"></div>
<div class="t q" style="left:1833px;top:1189.8px;letter-spacing:-.05px">r/Documents/anatomy_scene</div>
<div class="btn" style="left:2119px;top:1177.6px;width:37px;height:46px"></div>
<div class="t q" style="left:2128px;top:1189.8px">...</div>
<div class="cb" style="left:1153px;top:1239.2px;width:23px;height:23px;border-color:#c4c6c8"></div>
<svg style="left:1155px;top:1241.2px" width="18" height="18" viewBox="0 0 18 18"><path d="M2.500 9l4.500 6.500 8.500-14" fill="none" stroke="#111" stroke-width="2.600"/></svg>
<div class="t q" style="left:1186px;top:1240.2px;letter-spacing:-0.28px">inferior_vena_cava.stl</div>
<div class="btn" style="left:1508px;top:1228.0px;width:319px;height:46px;background:linear-gradient(#fafaf9,#e9eaea)"></div>
<div class="t q" style="left:1515px;top:1240.2px;letter-spacing:-.08px">Stereolithography Mesh (.stl)</div>
<div class="dn" style="left:1804px;top:1247.7px"></div>
<div class="abs" style="left:1832px;top:1229.0px;width:284px;height:44px;border:1.500px solid #b9bcbe;border-radius:4px;background:#fff"></div>
<div class="t q" style="left:1833px;top:1240.2px;letter-spacing:-.05px">r/Documents/anatomy_scene</div>
<div class="btn" style="left:2119px;top:1228.0px;width:37px;height:46px"></div>
<div class="t q" style="left:2128px;top:1240.2px">...</div>
<div class="abs" style="left:2158px;top:929px;width:25px;height:347px;background:#e3e4e3;border-left:1.500px solid #c4c6c6"></div>
<div class="abs" style="left:2160px;top:929px;width:23px;height:22px;background:#f4f4f3;border-bottom:1.500px solid #c4c6c6"></div>
<div class="abs" style="left:2160px;top:1254px;width:23px;height:22px;background:#f4f4f3;border-top:1.500px solid #c4c6c6"></div>
<div class="abs" style="left:2160px;top:1123px;width:23px;height:131px;background:linear-gradient(90deg,#f9f9f8,#efefee);border-top:1.500px solid #c4c6c6"></div>
<div class="dn" style="left:2165px;top:936px;transform:rotate(180deg)"></div>
<div class="dn" style="left:2165px;top:1262px"></div>
<div class="btn" style="left:1146px;top:1286px;width:749px;height:50px"></div>
<svg style="left:1157px;top:1294px" width="40" height="34" viewBox="0 0 40 34"><defs><linearGradient id="bf" x1="0" y1="0" x2="0" y2="1"><stop offset="0" stop-color="#8fc0f0"/><stop offset="1" stop-color="#5a98dc"/></linearGradient></defs><path d="M1 3h14l3 3h21v4H1z" fill="#4a7ab8"/><rect x="1" y="8" width="38" height="24" rx="1.500" fill="url(#bf)" stroke="#4a7ab8" stroke-width="1"/></svg>
<div class="t q" style="left:1343px;top:1299.9px;letter-spacing:-.05px">Change directory for selected files</div>
<div class="abs" style="left:1906px;top:1286px;width:133px;height:50px;border:2px solid #4a84b6;border-radius:6px;background:linear-gradient(#d3dbe0,#c6cfd5);box-shadow:inset 0 0 0 1.500px #a8cdec"></div>
<svg style="left:1928px;top:1290px" width="34" height="38" viewBox="0 0 34 38"><rect x="1" y="1" width="32" height="36" rx="2" fill="#4a7cbc"/><rect x="1" y="1" width="5" height="36" fill="#3a68a8"/><rect x="6" y="2" width="22" height="19" fill="#fff"/><rect x="8" y="26" width="19" height="11" fill="#b8bcb8"/><rect x="11" y="28" width="5" height="7" fill="#111"/></svg>
<div class="t q" style="left:1969px;top:1300.8px;font-size:20px;letter-spacing:-.4px">Save</div>
<div class="btn" style="left:2045px;top:1286px;width:133px;height:50px"></div>
<svg style="left:2060px;top:1292px" width="34" height="36" viewBox="0 0 34 36"><path d="M3 4c6 6 16 18 24 30M29 2C20 10 10 22 5 34" fill="none" stroke="#6a2a30" stroke-width="7" stroke-linecap="round"/><path d="M3 4c6 6 16 18 24 30M29 2C20 10 10 22 5 34" fill="none" stroke="#b8505a" stroke-width="4.500" stroke-linecap="round"/></svg>
<div class="t q" style="left:2100px;top:1300.8px;font-size:20px;letter-spacing:0">Cancel</div>
<svg style="left:1960px;top:1306px" width="36" height="52" viewBox="-5 -6 36 52"><path d="M0 0L23.500 24.200 18.200 28.200 14.800 40 .7 34.500Z" fill="#3a3c3e" stroke="#fff" stroke-width="2.600" stroke-linejoin="round"/></svg>
</div></div>
</body>
</html>
